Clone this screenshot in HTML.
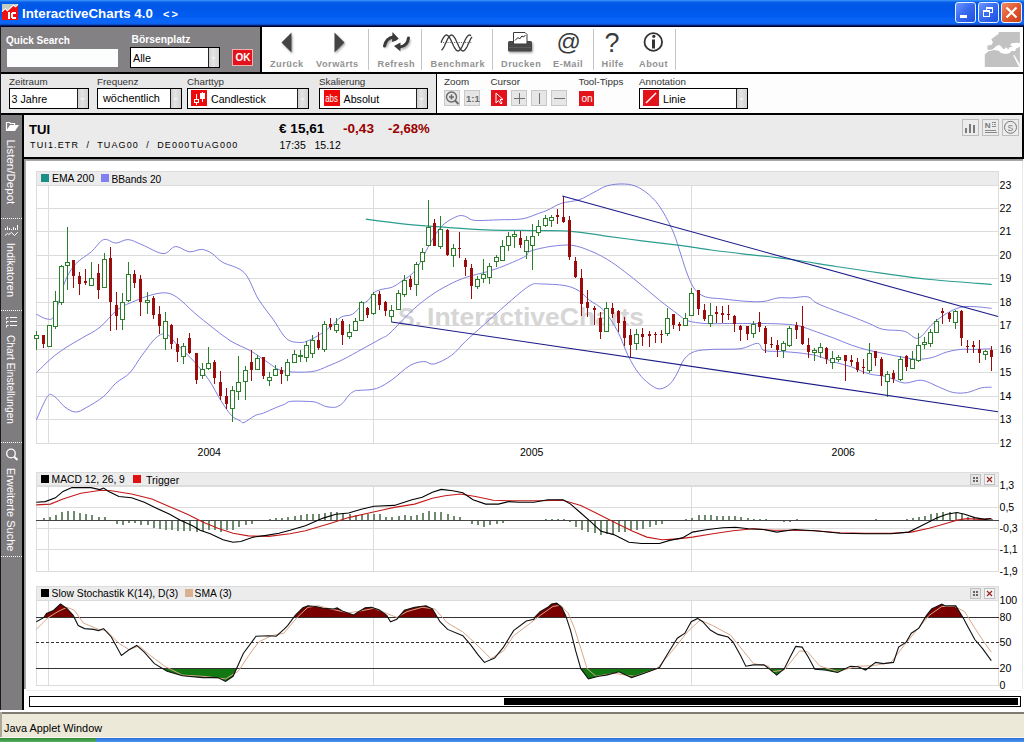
<!DOCTYPE html><html><head><meta charset="utf-8"><style>
html,body{margin:0;padding:0;width:1024px;height:742px;overflow:hidden;background:#fff;font-family:"Liberation Sans",sans-serif;}
.r{position:absolute;box-sizing:border-box;}
.t{position:absolute;white-space:pre;font-family:"Liberation Sans",sans-serif;}
svg{position:absolute;overflow:visible;}
</style></head><body>

<div class="r" style="left:0;top:0;width:1024px;height:27px;background:linear-gradient(to bottom,#3d95ff 0px,#2680f5 1px,#0a61e6 2px,#0058e6 4px,#0058ea 9px,#005cf0 16px,#0b66f8 20px,#0b66f8 23px,#0d5ce0 24px,#0a3ca8 25px,#000030 26px,#000030 27px);"></div>
<svg style="left:2px;top:4px" width="16" height="16" viewBox="0 0 16 16" shape-rendering="crispEdges">
<rect x="0" y="0" width="16" height="16" fill="#f01010"/>
<polygon points="0,0 16,0 16,0.2 13.6,2.6 11.5,1 5.4,6.6 3.4,4.5 0,7.4" fill="#c4ccc4"/>
<polyline points="0,7.6 3.4,4.7 5.4,6.8 11.5,1.2 13.6,2.8 16,0.4" fill="none" stroke="#fff" stroke-width="1.1" shape-rendering="auto"/>
<rect x="6" y="8" width="2" height="7" fill="#fff"/>
<path d="M10,8 h4 v2 h-3 v3 h3 v2 h-4 l-1,-1 v-5 z" fill="#fff"/>
</svg>
<div class="t" style="left:22px;top:6.74px;font-size:13.3px;line-height:13.3px;font-weight:bold;color:#fff;">InteractiveCharts 4.0</div>
<div class="t" style="left:163px;top:8.69px;font-size:11px;line-height:11px;font-weight:bold;color:#fff;letter-spacing:2px;">&lt;&gt;</div>
<div class="r" style="left:955px;top:2px;width:21px;height:21px;border:1px solid #e8f0ff;border-radius:3px;background:linear-gradient(135deg,#6f96ff,#3a6cf0 45%,#1d50e0);"></div>
<div class="r" style="left:978px;top:2px;width:21px;height:21px;border:1px solid #e8f0ff;border-radius:3px;background:linear-gradient(135deg,#6f96ff,#3a6cf0 45%,#1d50e0);"></div>
<div class="r" style="left:1001px;top:2px;width:21px;height:21px;border:1px solid #e8f0ff;border-radius:3px;background:linear-gradient(135deg,#ee8a66,#e2582e 50%,#cc4018);"></div>
<div class="r" style="left:960px;top:15px;width:7px;height:3px;background:#fff"></div>
<div class="r" style="left:986px;top:7px;width:7px;height:6px;border:1px solid #fff;border-top-width:2px"></div>
<div class="r" style="left:983px;top:10px;width:7px;height:7px;border:1px solid #fff;border-top-width:2px;background:#3a6cf0"></div>
<svg style="left:1001px;top:2px" width="21" height="21"><path d="M5.5,5.5 L15.5,15.5 M15.5,5.5 L5.5,15.5" stroke="#fff" stroke-width="2.2"/></svg>
<div class="r" style="left:0px;top:26px;width:1px;height:686px;background:#1a1a1a;"></div>
<div class="r" style="left:1023px;top:26px;width:1px;height:133px;background:#000;"></div>
<div class="r" style="left:1px;top:27px;width:259px;height:45px;background:#838183;"></div>
<div class="r" style="left:260px;top:27px;width:2px;height:45px;background:#000;"></div>
<div class="r" style="left:262px;top:27px;width:761px;height:45px;background:#fff;"></div>
<div class="r" style="left:1px;top:72px;width:1022px;height:2px;background:#000;"></div>
<div class="t" style="left:6px;top:35.53px;font-size:10px;line-height:10px;font-weight:bold;color:#fff;">Quick Search</div>
<div class="r" style="left:7px;top:49px;width:111px;height:18px;background:#fcfefe;"></div>
<div class="t" style="left:131.5px;top:35.28px;font-size:10.3px;line-height:10.3px;font-weight:bold;color:#fff;">Börsenplatz</div>
<div class="r" style="left:130px;top:47px;width:90px;height:21px;background:#fff;border:1px solid #000;"></div>
<div class="r" style="left:208px;top:48px;width:11px;height:19px;background:linear-gradient(to right,#cfcfcf,#e4e4e4 40%,#d2d2d2);border-left:1px solid #222;"></div>
<svg style="left:211px;top:57px" width="6" height="3"><polygon points="0,0 5,0 2.5,2.5" fill="#f2f2f2"/></svg>
<div class="t" style="left:133px;top:52.86px;font-size:10.8px;line-height:10.8px;font-weight:normal;color:#000;">Alle</div>
<div class="r" style="left:232px;top:49px;width:21px;height:17px;background:#e3131b;border:1px solid #f2b0b0;"></div>
<div class="t" style="left:235.5px;top:53.03px;font-size:10px;line-height:10px;font-weight:bold;color:#fff;">OK</div>
<div class="r" style="left:368px;top:29px;width:1px;height:41px;background:#c4c4c4;"></div>
<div class="r" style="left:421px;top:29px;width:1px;height:41px;background:#c4c4c4;"></div>
<div class="r" style="left:492px;top:29px;width:1px;height:41px;background:#c4c4c4;"></div>
<div class="r" style="left:593px;top:29px;width:1px;height:41px;background:#c4c4c4;"></div>
<div class="r" style="left:675px;top:29px;width:1px;height:41px;background:#c4c4c4;"></div>
<div class="t" style="left:270px;top:59.71px;font-size:9.2px;line-height:9.2px;font-weight:bold;color:#929292;letter-spacing:0.5px;">Zurück</div>
<div class="t" style="left:316px;top:59.71px;font-size:9.2px;line-height:9.2px;font-weight:bold;color:#929292;letter-spacing:0.5px;">Vorwärts</div>
<div class="t" style="left:377.5px;top:59.71px;font-size:9.2px;line-height:9.2px;font-weight:bold;color:#929292;letter-spacing:0.5px;">Refresh</div>
<div class="t" style="left:430.5px;top:59.71px;font-size:9.2px;line-height:9.2px;font-weight:bold;color:#929292;letter-spacing:0.5px;">Benchmark</div>
<div class="t" style="left:501px;top:59.71px;font-size:9.2px;line-height:9.2px;font-weight:bold;color:#929292;letter-spacing:0.5px;">Drucken</div>
<div class="t" style="left:553px;top:59.71px;font-size:9.2px;line-height:9.2px;font-weight:bold;color:#929292;letter-spacing:0.5px;">E-Mail</div>
<div class="t" style="left:601.5px;top:59.71px;font-size:9.2px;line-height:9.2px;font-weight:bold;color:#929292;letter-spacing:0.5px;">Hilfe</div>
<div class="t" style="left:639px;top:59.71px;font-size:9.2px;line-height:9.2px;font-weight:bold;color:#929292;letter-spacing:0.5px;">About</div>

<svg style="left:0;top:0" width="700" height="60" viewBox="0 0 700 60">
<defs><filter id="sh" x="-30%" y="-30%" width="160%" height="160%"><feGaussianBlur stdDeviation="0.9"/></filter></defs>
<g opacity="0.35" filter="url(#sh)" transform="translate(1,1.6)">
<polygon points="291.5,32.5 281.5,42.5 291.5,52.5" fill="#000"/>
<polygon points="334.5,32.5 344.5,42.5 334.5,52.5" fill="#000"/>
<path d="M384.5,46 Q386,38.5 393,37" fill="none" stroke="#000" stroke-width="3"/>
<path d="M408.5,38 Q407.5,46 400,47" fill="none" stroke="#000" stroke-width="3"/>
<rect x="508" y="41" width="24" height="10.5" rx="1.5" fill="#000"/>
</g>
<polygon points="291.5,32.5 281.5,42.5 291.5,52.5" fill="#444"/>
<polygon points="334.5,32.5 344.5,42.5 334.5,52.5" fill="#444"/>
<path d="M384.5,46 Q386,38.5 393,37" fill="none" stroke="#3a3a3a" stroke-width="3" stroke-linecap="round"/>
<polygon points="392.5,32 399.5,39.5 392,42" fill="#3a3a3a"/>
<path d="M408.5,38 Q407.5,46 400,47" fill="none" stroke="#3a3a3a" stroke-width="3" stroke-linecap="round"/>
<polygon points="400.5,42.5 394,46 400.5,51.5" fill="#3a3a3a"/>
<line x1="394" y1="44" x2="399" y2="39" stroke="#fff" stroke-width="1.2"/>
<polyline points="441.0,42.5 441.5,41.4 442.0,40.3 442.5,39.3 443.0,38.4 443.5,37.5 444.0,36.8 444.5,36.2 445.0,35.7 445.5,35.3 446.0,35.1 446.5,35.0 447.0,35.1 447.5,35.3 448.0,35.7 448.5,36.2 449.0,36.8 449.5,37.5 450.0,38.4 450.5,39.3 451.0,40.3 451.5,41.4 452.0,42.5 452.5,43.5 453.0,44.6 453.5,45.7 454.0,46.7 454.5,47.6 455.0,48.5 455.5,49.2 456.0,49.8 456.5,50.3 457.0,50.7 457.5,50.9 458.0,51.0 458.5,50.9 459.0,50.7 459.5,50.3 460.0,49.8 460.5,49.2 461.0,48.5 461.5,47.6 462.0,46.7 462.5,45.7 463.0,44.6 463.5,43.5 464.0,42.5 464.5,41.4 465.0,40.3 465.5,39.3 466.0,38.4 466.5,37.5 467.0,36.8 467.5,36.2 468.0,35.7 468.5,35.3 469.0,35.1 469.5,35.0 470.0,35.1 470.5,35.3 471.0,35.7" fill="none" stroke="#3a3a3a" stroke-width="1.3"/>
<polyline points="441.5,50.3 442.0,49.8 442.5,49.2 443.0,48.5 443.5,47.6 444.0,46.7 444.5,45.7 445.0,44.6 445.5,43.5 446.0,42.5 446.5,41.4 447.0,40.3 447.5,39.3 448.0,38.4 448.5,37.5 449.0,36.8 449.5,36.2 450.0,35.7 450.5,35.3 451.0,35.1 451.5,35.0 452.0,35.1 452.5,35.3 453.0,35.7 453.5,36.2 454.0,36.8 454.5,37.5 455.0,38.4 455.5,39.3 456.0,40.3 456.5,41.4 457.0,42.5 457.5,43.5 458.0,44.6 458.5,45.7 459.0,46.7 459.5,47.6 460.0,48.5 460.5,49.2 461.0,49.8 461.5,50.3 462.0,50.7 462.5,50.9 463.0,51.0 463.5,50.9 464.0,50.7 464.5,50.3 465.0,49.8 465.5,49.2 466.0,48.5 466.5,47.6 467.0,46.7 467.5,45.7 468.0,44.6 468.5,43.5 469.0,42.5 469.5,41.4 470.0,40.3 470.5,39.3 471.0,38.4 471.5,37.5 472.0,36.8" fill="none" stroke="#3a3a3a" stroke-width="1.3"/>
<line x1="441" y1="42.5" x2="472" y2="42.5" stroke="#555" stroke-width="1" stroke-dasharray="1,1.2"/>
<rect x="508" y="41" width="24" height="10.5" rx="1.5" fill="#474747"/>
<rect x="509" y="47" width="22" height="1" fill="#5a5a5a"/>
<path d="M513.5,32.5 H525 L527,34.5 V44 H513.5 Z" fill="#fff" stroke="#3a3a3a" stroke-width="1"/>
<polyline points="515,40.5 518,37.5 519.5,39 522,36 523.5,37 525.5,35" fill="none" stroke="#222" stroke-width="1"/>
<text x="556.5" y="49.5" font-family="Liberation Sans" font-size="24" fill="#3a3a3a">@</text>
<text x="604.5" y="51.6" font-family="Liberation Sans" font-size="27" fill="#3a3a3a">?</text>
<circle cx="653.3" cy="42" r="8.8" fill="none" stroke="#333" stroke-width="1.8"/>
<rect x="652" y="39.5" width="3" height="9" fill="#333"/>
<circle cx="653.8" cy="36.3" r="1.6" fill="#333"/>
</svg>

<svg style="left:0;top:0" width="1024" height="80"><polygon points="984.8,67.1 984.8,54.6 988.5,51.2 994.2,50.1 998.7,50.7 1001.0,52.9 1005.5,54.0 1009.4,53.2 1011.7,50.9 1015.1,50.9 1016.2,48.4 1019.9,46.7 1019.9,67.1" fill="#c2c2c2"/><polygon points="987.4,49.5 987.4,45.6 991.3,45.0 993.0,42.4 991.3,39.3 994.2,37.1 998.7,33.7 998.7,32.0 1019.9,32.0 1019.9,43.0 1016.2,42.8 1011.7,43.2 1010.0,45.0 1012.8,46.7 1009.4,47.3 1008.3,49.5 1006.0,47.3 1003.8,49.5 999.8,45.0 997.0,45.6 993.0,49.0 990.2,50.1" fill="#c2c2c2"/><polygon points="1014.0,54.6 1019.9,64.2 1019.9,67.1 1019.1,67.1 1013.4,55.7" fill="#fff"/></svg>
<div class="r" style="left:1px;top:74px;width:435px;height:39px;background:#e8e8e8;"></div>
<div class="r" style="left:436px;top:74px;width:1px;height:39px;background:#000;"></div>
<div class="r" style="left:437px;top:74px;width:586px;height:39px;background:#fdfdfd;"></div>
<div class="r" style="left:1px;top:113px;width:1022px;height:2px;background:#000;"></div>
<div class="t" style="left:9px;top:76.70px;font-size:9.8px;line-height:9.8px;font-weight:normal;color:#333;">Zeitraum</div>
<div class="t" style="left:97px;top:76.70px;font-size:9.8px;line-height:9.8px;font-weight:normal;color:#333;">Frequenz</div>
<div class="t" style="left:187px;top:76.70px;font-size:9.8px;line-height:9.8px;font-weight:normal;color:#333;">Charttyp</div>
<div class="t" style="left:319px;top:76.70px;font-size:9.8px;line-height:9.8px;font-weight:normal;color:#333;">Skalierung</div>
<div class="t" style="left:444px;top:76.70px;font-size:9.8px;line-height:9.8px;font-weight:normal;color:#333;">Zoom</div>
<div class="t" style="left:490.5px;top:76.70px;font-size:9.8px;line-height:9.8px;font-weight:normal;color:#333;">Cursor</div>
<div class="t" style="left:578.5px;top:76.70px;font-size:9.8px;line-height:9.8px;font-weight:normal;color:#333;">Tool-Tipps</div>
<div class="t" style="left:639px;top:76.70px;font-size:9.8px;line-height:9.8px;font-weight:normal;color:#333;">Annotation</div>
<div class="r" style="left:9px;top:88px;width:80px;height:21px;background:#fff;border:1px solid #000;"></div>
<div class="r" style="left:77px;top:89px;width:11px;height:19px;background:linear-gradient(to right,#cfcfcf,#e4e4e4 40%,#d2d2d2);border-left:1px solid #222;"></div>
<svg style="left:80px;top:98px" width="6" height="3"><polygon points="0,0 5,0 2.5,2.5" fill="#f2f2f2"/></svg>
<div class="t" style="left:11.5px;top:93.54px;font-size:10.7px;line-height:10.7px;font-weight:normal;color:#000;">3 Jahre</div>
<div class="r" style="left:97px;top:88px;width:85px;height:21px;background:#fff;border:1px solid #000;"></div>
<div class="r" style="left:170px;top:89px;width:11px;height:19px;background:linear-gradient(to right,#cfcfcf,#e4e4e4 40%,#d2d2d2);border-left:1px solid #222;"></div>
<svg style="left:173px;top:98px" width="6" height="3"><polygon points="0,0 5,0 2.5,2.5" fill="#f2f2f2"/></svg>
<div class="t" style="left:103px;top:93.37px;font-size:10.9px;line-height:10.9px;font-weight:normal;color:#000;">wöchentlich</div>
<div class="r" style="left:187px;top:88px;width:122px;height:21px;background:#fff;border:1px solid #000;"></div>
<div class="r" style="left:297px;top:89px;width:11px;height:19px;background:linear-gradient(to right,#cfcfcf,#e4e4e4 40%,#d2d2d2);border-left:1px solid #222;"></div>
<svg style="left:300px;top:98px" width="6" height="3"><polygon points="0,0 5,0 2.5,2.5" fill="#f2f2f2"/></svg>
<div class="t" style="left:211px;top:93.63px;font-size:10.6px;line-height:10.6px;font-weight:normal;color:#000;">Candlestick</div>
<div class="r" style="left:319px;top:88px;width:109px;height:21px;background:#fff;border:1px solid #000;"></div>
<div class="r" style="left:416px;top:89px;width:11px;height:19px;background:linear-gradient(to right,#cfcfcf,#e4e4e4 40%,#d2d2d2);border-left:1px solid #222;"></div>
<svg style="left:419px;top:98px" width="6" height="3"><polygon points="0,0 5,0 2.5,2.5" fill="#f2f2f2"/></svg>
<div class="t" style="left:343.5px;top:93.54px;font-size:10.7px;line-height:10.7px;font-weight:normal;color:#000;">Absolut</div>
<div class="r" style="left:639px;top:88px;width:109px;height:21px;background:#fff;border:1px solid #000;"></div>
<div class="r" style="left:736px;top:89px;width:11px;height:19px;background:linear-gradient(to right,#cfcfcf,#e4e4e4 40%,#d2d2d2);border-left:1px solid #222;"></div>
<svg style="left:739px;top:98px" width="6" height="3"><polygon points="0,0 5,0 2.5,2.5" fill="#f2f2f2"/></svg>
<div class="t" style="left:663px;top:93.54px;font-size:10.7px;line-height:10.7px;font-weight:normal;color:#000;">Linie</div>
<svg style="left:191px;top:90px" width="16" height="16" shape-rendering="crispEdges"><rect width="16" height="16" fill="#ee0a0a"/><path d="M5.5,4 V15 M11.5,2 V12" stroke="#fff" stroke-width="1"/><rect x="3.5" y="9.5" width="4" height="3" fill="#ee0a0a" stroke="#fff"/><rect x="9" y="3" width="5" height="6" fill="#fff"/></svg>
<svg style="left:324px;top:90px" width="16" height="16"><rect width="16" height="16" fill="#ee0a0a"/><text x="1.2" y="11.7" font-size="10" fill="#fff" font-family="Liberation Sans" textLength="12.7" lengthAdjust="spacingAndGlyphs">abs</text></svg>
<svg style="left:643px;top:90px" width="16" height="16"><rect width="16" height="16" fill="#e3131b"/><path d="M3,13 L13,3" stroke="#fff" stroke-width="1.5"/></svg>
<div class="r" style="left:444px;top:90px;width:16px;height:16px;background:#e6e6e6;border:1px solid #c8c8c8;"></div>
<div class="r" style="left:464px;top:90px;width:16px;height:16px;background:#e6e6e6;border:1px solid #c8c8c8;"></div>
<div class="r" style="left:491px;top:90px;width:16px;height:16px;background:#e3131b;border:1px solid #e3131b;"></div>
<div class="r" style="left:511px;top:90px;width:16px;height:16px;background:#e6e6e6;border:1px solid #c8c8c8;"></div>
<div class="r" style="left:531px;top:90px;width:16px;height:16px;background:#e6e6e6;border:1px solid #c8c8c8;"></div>
<div class="r" style="left:551px;top:90px;width:16px;height:16px;background:#e6e6e6;border:1px solid #c8c8c8;"></div>
<div class="r" style="left:579px;top:91px;width:15px;height:15px;background:#e3131b;"></div>
<div class="t" style="left:581.5px;top:93.53px;font-size:10px;line-height:10px;font-weight:normal;color:#fff;">on</div>
<svg style="left:444px;top:90px" width="16" height="16"><circle cx="7.5" cy="7" r="5" fill="none" stroke="#6a6a6a" stroke-width="1.4"/><path d="M5,7 H10 M7.5,4.5 V9.5" stroke="#6a6a6a" stroke-width="1.6"/><path d="M11,10.5 L14.5,14" stroke="#6a6a6a" stroke-width="2"/></svg>
<div class="t" style="left:466px;top:94.46px;font-size:9.5px;line-height:9.5px;font-weight:bold;color:#6a6a6a;">1:1</div>
<svg style="left:491px;top:90px" width="16" height="16"><path d="M5,3 L5,13 L7.5,10.5 L10,14 L11,13 L9,9.5 L12,9.5 Z" fill="#e3131b" stroke="#fff" stroke-width="1"/></svg>
<svg style="left:511px;top:90px" width="16" height="16"><path d="M8.5,3 V14 M3,8.5 H14" stroke="#707070" stroke-width="1"/></svg>
<svg style="left:531px;top:90px" width="16" height="16"><path d="M8.5,3 V14" stroke="#707070" stroke-width="1"/></svg>
<svg style="left:551px;top:90px" width="16" height="16"><path d="M3,8.5 H14" stroke="#707070" stroke-width="1"/></svg>
<div class="r" style="left:1px;top:115px;width:21px;height:595px;background:#7e7c7f;"></div>
<div class="r" style="left:22px;top:115px;width:2px;height:595px;background:#000;"></div>
<svg style="left:0;top:0" width="24" height="712" viewBox="0 0 24 712"><rect x="1" y="218" width="1" height="1" fill="#fff"/><rect x="3" y="218" width="1" height="1" fill="#fff"/><rect x="5" y="218" width="1" height="1" fill="#fff"/><rect x="7" y="218" width="1" height="1" fill="#fff"/><rect x="9" y="218" width="1" height="1" fill="#fff"/><rect x="11" y="218" width="1" height="1" fill="#fff"/><rect x="13" y="218" width="1" height="1" fill="#fff"/><rect x="15" y="218" width="1" height="1" fill="#fff"/><rect x="17" y="218" width="1" height="1" fill="#fff"/><rect x="19" y="218" width="1" height="1" fill="#fff"/><rect x="21" y="218" width="1" height="1" fill="#fff"/><rect x="1" y="310" width="1" height="1" fill="#fff"/><rect x="3" y="310" width="1" height="1" fill="#fff"/><rect x="5" y="310" width="1" height="1" fill="#fff"/><rect x="7" y="310" width="1" height="1" fill="#fff"/><rect x="9" y="310" width="1" height="1" fill="#fff"/><rect x="11" y="310" width="1" height="1" fill="#fff"/><rect x="13" y="310" width="1" height="1" fill="#fff"/><rect x="15" y="310" width="1" height="1" fill="#fff"/><rect x="17" y="310" width="1" height="1" fill="#fff"/><rect x="19" y="310" width="1" height="1" fill="#fff"/><rect x="21" y="310" width="1" height="1" fill="#fff"/><rect x="1" y="442" width="1" height="1" fill="#fff"/><rect x="3" y="442" width="1" height="1" fill="#fff"/><rect x="5" y="442" width="1" height="1" fill="#fff"/><rect x="7" y="442" width="1" height="1" fill="#fff"/><rect x="9" y="442" width="1" height="1" fill="#fff"/><rect x="11" y="442" width="1" height="1" fill="#fff"/><rect x="13" y="442" width="1" height="1" fill="#fff"/><rect x="15" y="442" width="1" height="1" fill="#fff"/><rect x="17" y="442" width="1" height="1" fill="#fff"/><rect x="19" y="442" width="1" height="1" fill="#fff"/><rect x="21" y="442" width="1" height="1" fill="#fff"/><rect x="1" y="556" width="1" height="1" fill="#fff"/><rect x="3" y="556" width="1" height="1" fill="#fff"/><rect x="5" y="556" width="1" height="1" fill="#fff"/><rect x="7" y="556" width="1" height="1" fill="#fff"/><rect x="9" y="556" width="1" height="1" fill="#fff"/><rect x="11" y="556" width="1" height="1" fill="#fff"/><rect x="13" y="556" width="1" height="1" fill="#fff"/><rect x="15" y="556" width="1" height="1" fill="#fff"/><rect x="17" y="556" width="1" height="1" fill="#fff"/><rect x="19" y="556" width="1" height="1" fill="#fff"/><rect x="21" y="556" width="1" height="1" fill="#fff"/><path d="M6.5,131 V122.5 H9.5 L10.5,123.5 H14.5 V125" fill="none" stroke="#fff" stroke-width="1.2"/><polygon points="6,131 15,131 19,125 10,125" fill="#fff"/><g fill="#fff"><rect x="5" y="228" width="1" height="2"/><rect x="7" y="226.5" width="1" height="3.5"/><rect x="9" y="228" width="1" height="2"/><rect x="11" y="229" width="1" height="1"/><rect x="13" y="227" width="1" height="3"/><rect x="15" y="228" width="1" height="2"/><rect x="17" y="225" width="1" height="5"/></g><polyline points="5,235.6 7.4,233.4 8.8,234.5 11.5,232.4 14.5,235.6 17.7,232.2" fill="none" stroke="#fff" stroke-width="1"/><path d="M6.5,319.5 V317.5 H8.5" fill="none" stroke="#fff" stroke-width="1"/><rect x="10" y="317" width="7" height="1" fill="#fff"/><path d="M6.5,323.5 V321.5 H8.5" fill="none" stroke="#fff" stroke-width="1"/><rect x="10" y="321" width="7" height="1" fill="#fff"/><path d="M6.5,327.5 V325.5 H8.5" fill="none" stroke="#fff" stroke-width="1"/><rect x="10" y="325" width="7" height="1" fill="#fff"/><circle cx="11" cy="453.5" r="4.3" fill="none" stroke="#fff" stroke-width="1.3"/><line x1="14.2" y1="456.8" x2="17.5" y2="460" stroke="#fff" stroke-width="2"/><g font-family="Liberation Sans" font-size="11.5" fill="#fff"><text transform="translate(7,139.4) rotate(90)" textLength="64.9" lengthAdjust="spacingAndGlyphs">Listen/Depot</text><text transform="translate(7,242.8) rotate(90)" textLength="54.2" lengthAdjust="spacingAndGlyphs">Indikatoren</text><text transform="translate(7,335) rotate(90)" textLength="89" lengthAdjust="spacingAndGlyphs">Chart Einstellungen</text><text transform="translate(7,467.7) rotate(90)" textLength="83.7" lengthAdjust="spacingAndGlyphs">Erweiterte Suche</text></g></svg>
<div class="r" style="left:24px;top:115px;width:998px;height:42px;background:#ebebeb;"></div>
<div class="r" style="left:1022px;top:115px;width:1px;height:44px;background:#000;"></div>
<div class="r" style="left:24px;top:157px;width:999px;height:2px;background:#000;"></div>
<div class="t" style="left:29px;top:122.91px;font-size:13.1px;line-height:13.1px;font-weight:bold;color:#000;">TUI</div>
<div class="t" style="left:30px;top:141.38px;font-size:9px;line-height:9px;font-weight:normal;color:#000;letter-spacing:1.14px;">TUI1.ETR  /  TUAG00  /  DE000TUAG000</div>
<div class="t" style="left:279px;top:121.99px;font-size:13.6px;line-height:13.6px;font-weight:bold;color:#000;">€ 15,61</div>
<div class="t" style="left:343px;top:121.99px;font-size:13.6px;line-height:13.6px;font-weight:bold;color:#990000;">-0,43</div>
<div class="t" style="left:388px;top:122.33px;font-size:13.2px;line-height:13.2px;font-weight:bold;color:#990000;">-2,68%</div>
<div class="t" style="left:279.5px;top:140.11px;font-size:10.5px;line-height:10.5px;font-weight:normal;color:#000;">17:35   15.12</div>
<div class="r" style="left:962px;top:119px;width:17px;height:17px;background:#ececec;border:1px solid #bdbdbd;"></div>
<div class="r" style="left:982px;top:119px;width:17px;height:17px;background:#ececec;border:1px solid #bdbdbd;"></div>
<div class="r" style="left:1002px;top:119px;width:17px;height:17px;background:#ececec;border:1px solid #bdbdbd;"></div>
<svg style="left:0;top:0" width="1024" height="160"><g fill="#7a7a7a"><rect x="965" y="128" width="2" height="5"/><rect x="969" y="124" width="2" height="9"/><rect x="973" y="125" width="2" height="8"/></g><text x="984.8" y="127.8" font-family="Liberation Sans" font-size="8" font-weight="bold" fill="#777">N</text><g fill="#888"><rect x="992" y="122" width="4" height="1"/><rect x="992" y="124" width="1" height="1"/><rect x="994" y="124" width="2" height="1"/><rect x="992" y="126" width="4" height="1"/><rect x="985" y="130" width="11" height="1"/><rect x="985" y="132" width="12" height="1"/></g><circle cx="1010.5" cy="127.3" r="6" fill="none" stroke="#777" stroke-width="1"/><text x="1007.6" y="130.5" font-family="Liberation Sans" font-size="8.5" fill="#777">S</text></svg>
<div class="r" style="left:24px;top:159px;width:1000px;height:551px;background:#fff;"></div>
<div class="r" style="left:24px;top:159px;width:999px;height:2px;background:linear-gradient(#8c8c8c,#b4b4b4);"></div>
<div class="r" style="left:24px;top:159px;width:2px;height:530px;background:linear-gradient(to right,#8c8c8c,#b4b4b4);"></div>
<div class="r" style="left:1022px;top:161px;width:1px;height:528px;background:#e8e8e8;"></div>
<div class="r" style="left:26px;top:690px;width:996px;height:1px;background:#eeeeee;"></div>
<svg style="left:0;top:0" width="1024" height="742" viewBox="0 0 1024 742" shape-rendering="crispEdges">
<rect x="36.5" y="171.5" width="962" height="14" fill="#ececec" stroke="#dcdcdc"/>
<line x1="36" y1="443.5" x2="999" y2="443.5" stroke="#dcdcdc"/>
<line x1="36" y1="419.5" x2="999" y2="419.5" stroke="#dcdcdc"/>
<line x1="36" y1="396.5" x2="999" y2="396.5" stroke="#dcdcdc"/>
<line x1="36" y1="372.5" x2="999" y2="372.5" stroke="#dcdcdc"/>
<line x1="36" y1="349.5" x2="999" y2="349.5" stroke="#dcdcdc"/>
<line x1="36" y1="325.5" x2="999" y2="325.5" stroke="#dcdcdc"/>
<line x1="36" y1="302.5" x2="999" y2="302.5" stroke="#dcdcdc"/>
<line x1="36" y1="278.5" x2="999" y2="278.5" stroke="#dcdcdc"/>
<line x1="36" y1="255.5" x2="999" y2="255.5" stroke="#dcdcdc"/>
<line x1="36" y1="231.5" x2="999" y2="231.5" stroke="#dcdcdc"/>
<line x1="36" y1="208.5" x2="999" y2="208.5" stroke="#dcdcdc"/>
<line x1="36" y1="185.5" x2="999" y2="185.5" stroke="#dcdcdc"/>
<line x1="48.5" y1="185" x2="48.5" y2="443" stroke="#dcdcdc"/>
<line x1="373.5" y1="185" x2="373.5" y2="443" stroke="#dcdcdc"/>
<line x1="691.5" y1="185" x2="691.5" y2="443" stroke="#dcdcdc"/>
<line x1="36.5" y1="171" x2="36.5" y2="443" stroke="#dcdcdc"/>
<line x1="998.5" y1="171" x2="998.5" y2="443" stroke="#dcdcdc"/>
<text x="427" y="325.5" font-family="Liberation Sans" font-weight="bold" font-size="25" fill="#d6d6d6" textLength="217" lengthAdjust="spacingAndGlyphs">InteractiveCharts</text>
<text x="398" y="325.5" font-family="Liberation Sans" font-weight="bold" font-size="25" fill="#d6d6d6">S.</text>
</svg>
<svg style="left:0;top:0" width="1024" height="742" viewBox="0 0 1024 742">
<path d="M36.3,314.2 C38.2,315.0 44.5,319.0 47.5,319.1 C50.5,319.2 51.6,321.1 54.5,314.9 C57.4,308.6 61.5,290.1 65.0,281.6 C68.5,273.1 71.1,269.1 75.5,264.1 C79.9,259.1 86.6,255.9 91.3,251.8 C96.0,247.7 99.5,241.1 103.6,239.6 C107.7,238.1 111.7,243.1 115.8,243.1 C119.9,243.1 123.7,239.3 128.1,239.6 C132.5,239.9 136.3,242.5 142.1,244.8 C147.9,247.1 157.5,253.3 163.1,253.6 C168.7,253.9 171.0,246.9 175.4,246.6 C179.8,246.3 185.0,251.3 189.4,251.8 C193.8,252.3 197.9,249.1 201.7,249.4 C205.5,249.7 208.7,251.4 212.2,253.6 C215.7,255.8 217.4,259.1 222.7,262.3 C228.0,265.5 238.3,266.5 244.2,272.6 C250.1,278.7 253.4,291.1 258.3,299.0 C263.2,306.9 268.7,313.2 273.4,319.8 C278.1,326.4 282.2,334.9 286.6,338.7 C291.0,342.5 296.0,342.2 299.8,342.5 C303.6,342.8 305.7,341.6 309.2,340.2 C312.7,338.8 316.8,336.4 320.6,334.0 C324.4,331.6 328.4,328.3 331.9,325.5 C335.3,322.7 337.9,318.9 341.3,317.0 C344.8,315.1 349.1,316.2 352.6,314.2 C356.1,312.1 359.5,307.1 362.1,304.7 C364.8,302.3 366.5,302.0 368.5,300.0 C370.5,298.0 372.1,294.4 374.2,292.6 C376.3,290.9 378.1,290.4 381.2,289.5 C384.2,288.6 388.9,288.5 392.5,287.0 C396.1,285.5 398.9,283.1 402.5,280.6 C406.1,278.1 410.5,275.8 413.8,272.1 C417.1,268.5 420.0,262.8 422.3,258.7 C424.6,254.6 425.5,251.7 427.9,247.4 C430.2,243.2 433.6,237.2 436.4,233.2 C439.2,229.2 441.4,226.1 444.9,223.3 C448.4,220.5 454.3,217.4 457.6,216.2 C460.9,215.0 462.3,215.6 464.7,216.2 C467.1,216.8 469.2,219.1 471.8,219.8 C474.4,220.5 475.5,220.5 480.0,220.5 C484.5,220.5 491.6,220.1 498.6,219.8 C505.6,219.5 515.4,220.0 522.0,218.9 C528.6,217.8 534.1,215.0 538.4,213.5 C542.7,212.0 543.9,211.7 547.8,210.0 C551.6,208.3 556.3,205.0 561.5,203.3 C566.7,201.6 573.7,201.6 579.0,199.8 C584.3,198.1 588.4,195.1 593.1,192.8 C597.8,190.5 601.9,187.3 607.1,185.8 C612.4,184.3 619.4,183.7 624.6,184.0 C629.9,184.3 633.9,185.2 638.6,187.5 C643.3,189.8 648.5,193.9 652.6,198.0 C656.7,202.1 659.6,206.2 663.1,212.0 C666.6,217.8 670.8,226.1 673.7,233.1 C676.6,240.1 678.4,247.1 680.7,254.1 C683.0,261.1 685.4,269.3 687.7,275.1 C690.0,280.9 691.8,285.5 694.7,289.1 C697.6,292.7 700.5,295.2 705.2,296.8 C709.9,298.4 715.7,298.1 722.7,298.9 C729.7,299.7 740.3,301.0 747.2,301.4 C754.1,301.8 758.9,302.0 764.0,301.4 C769.1,300.8 773.3,298.5 778.0,297.9 C782.7,297.3 787.0,298.1 792.0,297.9 C797.0,297.7 803.7,295.9 807.8,296.8 C811.9,297.7 812.2,300.9 816.6,303.1 C821.0,305.3 828.3,308.0 834.1,310.2 C839.9,312.4 845.8,314.3 851.6,316.5 C857.4,318.7 863.9,321.4 869.1,323.5 C874.4,325.6 877.2,328.1 883.1,329.4 C889.0,330.7 898.4,329.7 904.2,331.2 C910.1,332.7 913.5,339.4 918.2,338.2 C922.9,337.0 927.5,328.3 932.2,324.2 C936.9,320.1 941.5,316.5 946.2,313.7 C950.9,310.9 955.5,308.6 960.2,307.4 C964.9,306.2 969.0,306.4 974.2,306.6 C979.5,306.8 988.8,308.1 991.7,308.4" fill="none" stroke="#8080e0" stroke-width="1"/>
<path d="M36.3,372.7 C38.8,370.4 46.2,362.8 51.0,358.7 C55.8,354.6 59.7,351.7 65.0,348.2 C70.3,344.7 76.8,341.2 82.6,337.7 C88.4,334.2 94.2,331.9 100.0,327.2 C105.8,322.5 111.8,314.0 117.6,309.6 C123.4,305.2 129.8,303.2 135.1,300.9 C140.3,298.6 144.1,297.0 149.1,295.6 C154.1,294.2 160.2,292.5 164.9,292.8 C169.6,293.1 172.2,294.0 177.2,297.4 C182.2,300.8 188.9,308.1 194.7,313.1 C200.5,318.1 206.3,322.6 212.2,327.2 C218.1,331.8 223.6,336.6 230.0,340.6 C236.4,344.6 244.5,347.4 250.8,351.0 C257.1,354.6 262.4,359.0 267.7,362.3 C273.0,365.6 275.6,369.2 282.8,370.8 C290.0,372.4 303.6,372.5 311.1,371.7 C318.7,370.9 322.8,368.1 328.1,366.0 C333.5,363.9 337.5,362.2 343.2,359.4 C348.9,356.6 355.8,352.6 362.1,349.1 C368.4,345.7 376.2,341.4 380.9,338.7 C385.5,336.0 384.6,337.9 390.0,333.0 C395.4,328.1 406.3,315.8 413.1,309.6 C419.9,303.4 424.9,299.7 430.7,295.6 C436.5,291.5 442.4,288.1 448.2,285.1 C454.0,282.1 459.3,279.6 465.7,277.4 C472.1,275.2 480.3,273.7 486.7,271.8 C493.1,269.9 497.8,268.4 504.2,265.8 C510.6,263.2 521.0,258.8 525.3,256.4 C529.6,254.0 525.7,253.0 530.0,251.3 C534.3,249.6 544.0,247.4 551.0,246.4 C558.0,245.4 565.6,244.6 572.0,245.3 C578.4,246.0 583.8,248.3 589.6,250.6 C595.5,252.9 601.3,255.8 607.1,259.3 C612.9,262.8 618.8,267.2 624.6,271.6 C630.4,276.0 636.3,280.8 642.1,285.6 C647.9,290.4 653.8,295.6 659.6,300.3 C665.5,305.0 672.5,310.3 677.2,313.7 C681.9,317.1 683.0,319.1 687.7,320.7 C692.4,322.3 698.2,323.0 705.2,323.5 C712.2,324.0 719.9,323.5 729.7,323.5 C739.5,323.5 754.8,323.4 764.0,323.5 C773.2,323.6 779.2,323.8 785.0,324.2 C790.8,324.6 793.7,324.6 799.0,325.9 C804.3,327.2 810.8,329.8 816.6,331.9 C822.5,333.9 828.3,336.0 834.1,338.2 C839.9,340.4 845.8,343.2 851.6,345.2 C857.4,347.2 863.3,348.9 869.1,350.4 C874.9,351.9 880.8,352.8 886.6,354.0 C892.5,355.2 898.9,356.6 904.2,357.5 C909.5,358.4 913.5,359.2 918.2,359.2 C922.9,359.2 927.5,358.7 932.2,357.5 C936.9,356.3 941.5,353.6 946.2,352.2 C950.9,350.8 955.5,349.9 960.2,349.4 C964.9,348.9 969.0,349.5 974.2,349.4 C979.5,349.3 988.8,348.8 991.7,348.7" fill="none" stroke="#8080e0" stroke-width="1"/>
<path d="M36.3,420.0 C38.2,416.1 44.5,400.4 47.5,396.5 C50.5,392.6 51.6,394.7 54.5,396.5 C57.4,398.3 61.5,404.5 65.0,407.1 C68.5,409.7 72.0,411.9 75.5,412.0 C79.0,412.1 81.4,410.3 86.1,407.7 C90.8,405.1 98.6,400.6 103.6,396.5 C108.5,392.4 111.4,387.2 115.8,383.2 C120.2,379.2 125.5,377.4 129.9,372.7 C134.3,368.0 137.7,361.0 142.1,355.2 C146.5,349.4 152.0,341.2 156.1,337.7 C160.2,334.2 163.1,333.0 166.6,334.2 C170.1,335.4 172.5,340.0 177.2,344.7 C181.9,349.4 189.4,356.4 194.7,362.2 C199.9,368.0 204.3,373.3 208.7,379.7 C213.1,386.1 217.2,394.7 221.0,400.7 C224.8,406.7 228.3,412.2 231.5,415.5 C234.7,418.8 237.9,419.5 240.0,420.7 C242.1,421.9 241.6,423.4 244.1,422.5 C246.6,421.6 252.0,417.1 255.2,415.5 C258.4,413.9 260.1,414.4 263.4,413.1 C266.7,411.8 271.7,409.4 275.2,407.9 C278.7,406.4 282.0,405.4 284.5,404.3 C287.0,403.2 286.7,401.9 290.4,401.4 C294.1,400.9 302.5,401.2 306.8,401.4 C311.1,401.5 313.3,401.5 316.2,402.3 C319.1,403.1 321.9,405.3 324.4,406.1 C326.9,406.9 329.2,407.2 331.4,407.3 C333.5,407.4 335.4,407.5 337.3,406.7 C339.2,405.9 341.2,404.6 343.1,402.6 C345.1,400.7 347.1,396.9 349.0,395.0 C350.9,393.1 353.0,391.7 354.8,390.9 C356.6,390.1 356.4,390.7 360.0,390.3 C363.6,389.9 371.0,390.3 376.4,388.5 C381.8,386.7 386.6,383.5 392.1,379.7 C397.6,375.9 404.3,368.7 409.6,365.7 C414.9,362.7 419.6,361.8 423.7,361.5 C427.8,361.2 429.5,365.1 434.2,364.0 C438.9,362.9 446.4,359.0 451.7,355.2 C456.9,351.4 460.4,346.2 465.7,341.2 C470.9,336.2 477.4,330.7 483.2,325.4 C489.0,320.1 494.3,315.3 500.7,309.6 C507.1,303.9 516.5,295.6 521.8,291.4 C527.1,287.2 529.2,285.6 532.3,284.4 C535.4,283.1 535.0,283.7 540.5,283.9 C546.0,284.1 558.6,284.4 565.0,285.6 C571.4,286.8 574.9,288.4 579.0,290.9 C583.1,293.3 585.5,297.1 589.6,300.3 C593.7,303.5 598.9,305.1 603.6,310.2 C608.3,315.3 613.5,323.6 617.6,331.2 C621.7,338.8 624.6,348.7 628.1,355.7 C631.6,362.7 635.1,368.5 638.6,373.2 C642.1,377.9 645.6,381.1 649.1,383.7 C652.6,386.3 656.1,389.0 659.6,389.0 C663.1,389.0 667.3,386.3 670.2,383.7 C673.1,381.1 674.9,377.3 677.2,373.2 C679.5,369.1 681.3,362.8 684.2,359.2 C687.1,355.6 690.0,353.1 694.7,351.5 C699.4,349.9 704.6,349.9 712.2,349.4 C719.8,348.9 732.6,349.7 740.2,348.7 C747.8,347.7 753.7,343.1 757.7,343.4 C761.7,343.7 760.0,349.0 764.0,350.4 C768.0,351.8 775.7,351.1 781.5,351.5 C787.3,351.9 793.1,352.2 799.0,352.9 C804.9,353.6 810.8,354.2 816.6,355.7 C822.5,357.2 828.3,360.1 834.1,362.0 C839.9,363.9 845.8,364.9 851.6,366.9 C857.4,368.9 863.3,372.3 869.1,373.9 C874.9,375.5 880.8,375.2 886.6,376.7 C892.5,378.2 898.4,382.4 904.2,383.0 C910.1,383.6 915.9,379.5 921.7,380.2 C927.5,380.9 934.0,385.1 939.2,387.2 C944.5,389.2 948.5,391.6 953.2,392.5 C957.9,393.4 962.5,393.3 967.2,392.5 C971.9,391.7 977.1,388.8 981.2,387.9 C985.3,387.0 990.0,387.3 991.7,387.2" fill="none" stroke="#8080e0" stroke-width="1"/>
<path d="M365.8,219.2 C371.9,220.0 390.2,222.5 402.6,223.8 C415.0,225.1 425.9,225.9 440.0,226.9 C454.1,227.9 471.3,229.3 487.0,229.9 C502.7,230.5 520.3,230.4 534.0,230.6 C547.7,230.8 557.3,230.2 569.0,231.1 C580.7,232.0 591.8,234.2 604.0,235.8 C616.2,237.4 629.3,239.2 642.0,240.8 C654.7,242.4 668.5,243.9 680.0,245.4 C691.5,246.9 700.9,248.6 711.3,250.0 C721.7,251.4 729.8,252.2 742.5,253.8 C755.2,255.2 772.2,256.9 787.8,259.0 C803.4,261.1 820.4,264.1 836.2,266.5 C852.1,268.9 867.4,271.2 883.0,273.4 C898.6,275.6 911.9,277.7 930.0,279.5 C948.1,281.3 981.4,283.6 991.7,284.4" fill="none" stroke="#2a9d8f" stroke-width="1.2"/>
</svg>
<svg style="left:0;top:0" width="1024" height="742" viewBox="0 0 1024 742" shape-rendering="crispEdges">
<line x1="36.5" y1="331" x2="36.5" y2="350" stroke="#2b7f2b"/>
<rect x="34.5" y="335.5" width="4" height="3" fill="#fff" stroke="#2b7f2b"/>
<line x1="43.5" y1="335" x2="43.5" y2="348" stroke="#9c0c0c"/>
<rect x="42" y="335" width="3" height="9" fill="#9c0c0c"/>
<line x1="49.5" y1="325" x2="49.5" y2="347" stroke="#2b7f2b"/>
<rect x="47.5" y="325.5" width="4" height="21" fill="#fff" stroke="#2b7f2b"/>
<line x1="55.5" y1="291" x2="55.5" y2="329" stroke="#2b7f2b"/>
<rect x="53.5" y="301.5" width="4" height="25" fill="#fff" stroke="#2b7f2b"/>
<line x1="61.5" y1="265" x2="61.5" y2="305" stroke="#2b7f2b"/>
<rect x="59.5" y="266.5" width="4" height="36" fill="#fff" stroke="#2b7f2b"/>
<line x1="67.5" y1="227" x2="67.5" y2="290" stroke="#2b7f2b"/>
<rect x="65.5" y="262.5" width="4" height="3" fill="#fff" stroke="#2b7f2b"/>
<line x1="73.5" y1="260" x2="73.5" y2="288" stroke="#9c0c0c"/>
<rect x="72" y="260" width="3" height="16" fill="#9c0c0c"/>
<line x1="79.5" y1="272" x2="79.5" y2="295" stroke="#9c0c0c"/>
<rect x="78" y="276" width="3" height="8" fill="#9c0c0c"/>
<line x1="85.5" y1="269" x2="85.5" y2="285" stroke="#9c0c0c"/>
<rect x="84" y="281" width="3" height="2" fill="#9c0c0c"/>
<line x1="91.5" y1="262" x2="91.5" y2="285" stroke="#2b7f2b"/>
<rect x="89.5" y="278.5" width="4" height="7" fill="#fff" stroke="#2b7f2b"/>
<line x1="98.5" y1="264" x2="98.5" y2="299" stroke="#9c0c0c"/>
<rect x="97" y="273" width="3" height="17" fill="#9c0c0c"/>
<line x1="104.5" y1="253" x2="104.5" y2="287" stroke="#2b7f2b"/>
<rect x="102.5" y="259.5" width="4" height="28" fill="#fff" stroke="#2b7f2b"/>
<line x1="110.5" y1="247" x2="110.5" y2="331" stroke="#9c0c0c"/>
<rect x="109" y="258" width="3" height="44" fill="#9c0c0c"/>
<line x1="116.5" y1="292" x2="116.5" y2="330" stroke="#9c0c0c"/>
<rect x="115" y="305" width="3" height="11" fill="#9c0c0c"/>
<line x1="122.5" y1="293" x2="122.5" y2="330" stroke="#2b7f2b"/>
<rect x="120.5" y="302.5" width="4" height="17" fill="#fff" stroke="#2b7f2b"/>
<line x1="128.5" y1="262" x2="128.5" y2="302" stroke="#2b7f2b"/>
<rect x="126.5" y="274.5" width="4" height="26" fill="#fff" stroke="#2b7f2b"/>
<line x1="134.5" y1="270" x2="134.5" y2="288" stroke="#9c0c0c"/>
<rect x="133" y="274" width="3" height="9" fill="#9c0c0c"/>
<line x1="140.5" y1="275" x2="140.5" y2="316" stroke="#9c0c0c"/>
<rect x="139" y="279" width="3" height="23" fill="#9c0c0c"/>
<line x1="147.5" y1="292" x2="147.5" y2="314" stroke="#2b7f2b"/>
<rect x="145.5" y="300.5" width="4" height="2" fill="#fff" stroke="#2b7f2b"/>
<line x1="153.5" y1="296" x2="153.5" y2="319" stroke="#9c0c0c"/>
<rect x="152" y="298" width="3" height="17" fill="#9c0c0c"/>
<line x1="159.5" y1="306" x2="159.5" y2="334" stroke="#9c0c0c"/>
<rect x="158" y="314" width="3" height="12" fill="#9c0c0c"/>
<line x1="165.5" y1="312" x2="165.5" y2="350" stroke="#2b7f2b"/>
<rect x="163.5" y="321.5" width="4" height="17" fill="#fff" stroke="#2b7f2b"/>
<line x1="171.5" y1="324" x2="171.5" y2="349" stroke="#9c0c0c"/>
<rect x="170" y="325" width="3" height="19" fill="#9c0c0c"/>
<line x1="177.5" y1="338" x2="177.5" y2="362" stroke="#9c0c0c"/>
<rect x="176" y="344" width="3" height="8" fill="#9c0c0c"/>
<line x1="183.5" y1="343" x2="183.5" y2="364" stroke="#2b7f2b"/>
<rect x="181.5" y="346.5" width="4" height="10" fill="#fff" stroke="#2b7f2b"/>
<line x1="189.5" y1="333" x2="189.5" y2="354" stroke="#9c0c0c"/>
<rect x="188" y="338" width="3" height="15" fill="#9c0c0c"/>
<line x1="196.5" y1="353" x2="196.5" y2="384" stroke="#9c0c0c"/>
<rect x="195" y="353" width="3" height="27" fill="#9c0c0c"/>
<line x1="202.5" y1="363" x2="202.5" y2="379" stroke="#2b7f2b"/>
<rect x="200.5" y="369.5" width="4" height="6" fill="#fff" stroke="#2b7f2b"/>
<line x1="208.5" y1="347" x2="208.5" y2="370" stroke="#2b7f2b"/>
<rect x="206.5" y="363.5" width="4" height="5" fill="#fff" stroke="#2b7f2b"/>
<line x1="214.5" y1="360" x2="214.5" y2="384" stroke="#9c0c0c"/>
<rect x="213" y="362" width="3" height="16" fill="#9c0c0c"/>
<line x1="220.5" y1="371" x2="220.5" y2="400" stroke="#9c0c0c"/>
<rect x="219" y="382" width="3" height="14" fill="#9c0c0c"/>
<line x1="226.5" y1="388" x2="226.5" y2="409" stroke="#9c0c0c"/>
<rect x="225" y="396" width="3" height="8" fill="#9c0c0c"/>
<line x1="232.5" y1="386" x2="232.5" y2="422" stroke="#2b7f2b"/>
<rect x="230.5" y="390.5" width="4" height="18" fill="#fff" stroke="#2b7f2b"/>
<line x1="238.5" y1="356" x2="238.5" y2="400" stroke="#2b7f2b"/>
<rect x="236.5" y="382.5" width="4" height="9" fill="#fff" stroke="#2b7f2b"/>
<line x1="245.5" y1="366" x2="245.5" y2="400" stroke="#2b7f2b"/>
<rect x="243.5" y="370.5" width="4" height="11" fill="#fff" stroke="#2b7f2b"/>
<line x1="251.5" y1="350" x2="251.5" y2="381" stroke="#9c0c0c"/>
<rect x="250" y="362" width="3" height="8" fill="#9c0c0c"/>
<line x1="257.5" y1="355" x2="257.5" y2="369" stroke="#2b7f2b"/>
<rect x="255.5" y="358.5" width="4" height="11" fill="#fff" stroke="#2b7f2b"/>
<line x1="263.5" y1="357" x2="263.5" y2="379" stroke="#9c0c0c"/>
<rect x="262" y="357" width="3" height="19" fill="#9c0c0c"/>
<line x1="269.5" y1="372" x2="269.5" y2="386" stroke="#2b7f2b"/>
<rect x="267.5" y="377.5" width="4" height="3" fill="#fff" stroke="#2b7f2b"/>
<line x1="275.5" y1="365" x2="275.5" y2="375" stroke="#2b7f2b"/>
<rect x="273.5" y="369.5" width="4" height="6" fill="#fff" stroke="#2b7f2b"/>
<line x1="281.5" y1="367" x2="281.5" y2="384" stroke="#9c0c0c"/>
<rect x="280" y="370" width="3" height="4" fill="#9c0c0c"/>
<line x1="287.5" y1="359" x2="287.5" y2="381" stroke="#2b7f2b"/>
<rect x="285.5" y="362.5" width="4" height="13" fill="#fff" stroke="#2b7f2b"/>
<line x1="294.5" y1="350" x2="294.5" y2="362" stroke="#2b7f2b"/>
<rect x="292.5" y="354.5" width="4" height="8" fill="#fff" stroke="#2b7f2b"/>
<line x1="300.5" y1="350" x2="300.5" y2="362" stroke="#2b7f2b"/>
<rect x="298.5" y="355.5" width="4" height="1" fill="#fff" stroke="#2b7f2b"/>
<line x1="306.5" y1="341" x2="306.5" y2="362" stroke="#2b7f2b"/>
<rect x="304.5" y="345.5" width="4" height="12" fill="#fff" stroke="#2b7f2b"/>
<line x1="312.5" y1="335" x2="312.5" y2="358" stroke="#2b7f2b"/>
<rect x="310.5" y="340.5" width="4" height="13" fill="#fff" stroke="#2b7f2b"/>
<line x1="318.5" y1="332" x2="318.5" y2="350" stroke="#9c0c0c"/>
<rect x="317" y="340" width="3" height="8" fill="#9c0c0c"/>
<line x1="324.5" y1="321" x2="324.5" y2="352" stroke="#2b7f2b"/>
<rect x="322.5" y="324.5" width="4" height="25" fill="#fff" stroke="#2b7f2b"/>
<line x1="330.5" y1="318" x2="330.5" y2="330" stroke="#9c0c0c"/>
<rect x="329" y="324" width="3" height="3" fill="#9c0c0c"/>
<line x1="336.5" y1="318" x2="336.5" y2="333" stroke="#2b7f2b"/>
<rect x="334.5" y="324.5" width="4" height="6" fill="#fff" stroke="#2b7f2b"/>
<line x1="342.5" y1="319" x2="342.5" y2="345" stroke="#9c0c0c"/>
<rect x="341" y="321" width="3" height="14" fill="#9c0c0c"/>
<line x1="349.5" y1="324" x2="349.5" y2="339" stroke="#2b7f2b"/>
<rect x="347.5" y="332.5" width="4" height="4" fill="#fff" stroke="#2b7f2b"/>
<line x1="355.5" y1="318" x2="355.5" y2="331" stroke="#2b7f2b"/>
<rect x="353.5" y="321.5" width="4" height="9" fill="#fff" stroke="#2b7f2b"/>
<line x1="361.5" y1="301" x2="361.5" y2="321" stroke="#2b7f2b"/>
<rect x="359.5" y="302.5" width="4" height="18" fill="#fff" stroke="#2b7f2b"/>
<line x1="367.5" y1="307" x2="367.5" y2="318" stroke="#9c0c0c"/>
<rect x="366" y="308" width="3" height="7" fill="#9c0c0c"/>
<line x1="373.5" y1="292" x2="373.5" y2="315" stroke="#2b7f2b"/>
<rect x="371.5" y="294.5" width="4" height="19" fill="#fff" stroke="#2b7f2b"/>
<line x1="379.5" y1="291" x2="379.5" y2="310" stroke="#9c0c0c"/>
<rect x="378" y="294" width="3" height="11" fill="#9c0c0c"/>
<line x1="385.5" y1="301" x2="385.5" y2="316" stroke="#9c0c0c"/>
<rect x="384" y="302" width="3" height="9" fill="#9c0c0c"/>
<line x1="391.5" y1="305" x2="391.5" y2="322" stroke="#2b7f2b"/>
<rect x="389.5" y="310.5" width="4" height="6" fill="#fff" stroke="#2b7f2b"/>
<line x1="398.5" y1="290" x2="398.5" y2="310" stroke="#2b7f2b"/>
<rect x="396.5" y="293.5" width="4" height="16" fill="#fff" stroke="#2b7f2b"/>
<line x1="404.5" y1="275" x2="404.5" y2="297" stroke="#2b7f2b"/>
<rect x="402.5" y="280.5" width="4" height="14" fill="#fff" stroke="#2b7f2b"/>
<line x1="410.5" y1="276" x2="410.5" y2="290" stroke="#9c0c0c"/>
<rect x="409" y="279" width="3" height="8" fill="#9c0c0c"/>
<line x1="416.5" y1="262" x2="416.5" y2="296" stroke="#2b7f2b"/>
<rect x="414.5" y="264.5" width="4" height="20" fill="#fff" stroke="#2b7f2b"/>
<line x1="422.5" y1="248" x2="422.5" y2="270" stroke="#2b7f2b"/>
<rect x="420.5" y="252.5" width="4" height="9" fill="#fff" stroke="#2b7f2b"/>
<line x1="428.5" y1="200" x2="428.5" y2="246" stroke="#2b7f2b"/>
<rect x="426.5" y="227.5" width="4" height="18" fill="#fff" stroke="#2b7f2b"/>
<line x1="434.5" y1="219" x2="434.5" y2="246" stroke="#9c0c0c"/>
<rect x="433" y="223" width="3" height="23" fill="#9c0c0c"/>
<line x1="440.5" y1="216" x2="440.5" y2="249" stroke="#2b7f2b"/>
<rect x="438.5" y="229.5" width="4" height="17" fill="#fff" stroke="#2b7f2b"/>
<line x1="447.5" y1="229" x2="447.5" y2="256" stroke="#9c0c0c"/>
<rect x="446" y="230" width="3" height="25" fill="#9c0c0c"/>
<line x1="453.5" y1="244" x2="453.5" y2="267" stroke="#2b7f2b"/>
<rect x="451.5" y="248.5" width="4" height="7" fill="#fff" stroke="#2b7f2b"/>
<line x1="459.5" y1="232" x2="459.5" y2="258" stroke="#9c0c0c"/>
<rect x="458" y="248" width="3" height="1" fill="#9c0c0c"/>
<line x1="465.5" y1="258" x2="465.5" y2="276" stroke="#9c0c0c"/>
<rect x="464" y="260" width="3" height="7" fill="#9c0c0c"/>
<line x1="471.5" y1="264" x2="471.5" y2="299" stroke="#9c0c0c"/>
<rect x="470" y="268" width="3" height="18" fill="#9c0c0c"/>
<line x1="477.5" y1="276" x2="477.5" y2="289" stroke="#2b7f2b"/>
<rect x="475.5" y="279.5" width="4" height="7" fill="#fff" stroke="#2b7f2b"/>
<line x1="483.5" y1="259" x2="483.5" y2="283" stroke="#2b7f2b"/>
<rect x="481.5" y="274.5" width="4" height="4" fill="#fff" stroke="#2b7f2b"/>
<line x1="489.5" y1="263" x2="489.5" y2="284" stroke="#2b7f2b"/>
<rect x="487.5" y="266.5" width="4" height="11" fill="#fff" stroke="#2b7f2b"/>
<line x1="496.5" y1="255" x2="496.5" y2="267" stroke="#2b7f2b"/>
<rect x="494.5" y="257.5" width="4" height="4" fill="#fff" stroke="#2b7f2b"/>
<line x1="502.5" y1="240" x2="502.5" y2="260" stroke="#2b7f2b"/>
<rect x="500.5" y="246.5" width="4" height="14" fill="#fff" stroke="#2b7f2b"/>
<line x1="508.5" y1="232" x2="508.5" y2="251" stroke="#2b7f2b"/>
<rect x="506.5" y="236.5" width="4" height="9" fill="#fff" stroke="#2b7f2b"/>
<line x1="514.5" y1="231" x2="514.5" y2="248" stroke="#2b7f2b"/>
<rect x="512.5" y="234.5" width="4" height="2" fill="#fff" stroke="#2b7f2b"/>
<line x1="520.5" y1="231" x2="520.5" y2="248" stroke="#9c0c0c"/>
<rect x="519" y="238" width="3" height="7" fill="#9c0c0c"/>
<line x1="526.5" y1="236" x2="526.5" y2="259" stroke="#2b7f2b"/>
<rect x="524.5" y="240.5" width="4" height="11" fill="#fff" stroke="#2b7f2b"/>
<line x1="532.5" y1="224" x2="532.5" y2="270" stroke="#2b7f2b"/>
<rect x="530.5" y="236.5" width="4" height="9" fill="#fff" stroke="#2b7f2b"/>
<line x1="538.5" y1="220" x2="538.5" y2="236" stroke="#2b7f2b"/>
<rect x="536.5" y="226.5" width="4" height="6" fill="#fff" stroke="#2b7f2b"/>
<line x1="545.5" y1="215" x2="545.5" y2="227" stroke="#2b7f2b"/>
<rect x="543.5" y="218.5" width="4" height="7" fill="#fff" stroke="#2b7f2b"/>
<line x1="551.5" y1="215" x2="551.5" y2="227" stroke="#2b7f2b"/>
<rect x="549.5" y="217.5" width="4" height="3" fill="#fff" stroke="#2b7f2b"/>
<line x1="557.5" y1="209" x2="557.5" y2="224" stroke="#9c0c0c"/>
<rect x="556" y="215" width="3" height="2" fill="#9c0c0c"/>
<line x1="563.5" y1="196" x2="563.5" y2="223" stroke="#9c0c0c"/>
<rect x="562" y="217" width="3" height="5" fill="#9c0c0c"/>
<line x1="569.5" y1="216" x2="569.5" y2="260" stroke="#9c0c0c"/>
<rect x="568" y="220" width="3" height="37" fill="#9c0c0c"/>
<line x1="575.5" y1="257" x2="575.5" y2="278" stroke="#9c0c0c"/>
<rect x="574" y="261" width="3" height="16" fill="#9c0c0c"/>
<line x1="581.5" y1="269" x2="581.5" y2="316" stroke="#9c0c0c"/>
<rect x="580" y="278" width="3" height="26" fill="#9c0c0c"/>
<line x1="587.5" y1="290" x2="587.5" y2="317" stroke="#9c0c0c"/>
<rect x="586" y="302" width="3" height="6" fill="#9c0c0c"/>
<line x1="594.5" y1="306" x2="594.5" y2="325" stroke="#9c0c0c"/>
<rect x="593" y="308" width="3" height="2" fill="#9c0c0c"/>
<line x1="600.5" y1="312" x2="600.5" y2="339" stroke="#9c0c0c"/>
<rect x="599" y="318" width="3" height="14" fill="#9c0c0c"/>
<line x1="606.5" y1="302" x2="606.5" y2="332" stroke="#2b7f2b"/>
<rect x="604.5" y="308.5" width="4" height="23" fill="#fff" stroke="#2b7f2b"/>
<line x1="612.5" y1="303" x2="612.5" y2="318" stroke="#9c0c0c"/>
<rect x="611" y="308" width="3" height="6" fill="#9c0c0c"/>
<line x1="618.5" y1="310" x2="618.5" y2="332" stroke="#9c0c0c"/>
<rect x="617" y="311" width="3" height="12" fill="#9c0c0c"/>
<line x1="624.5" y1="317" x2="624.5" y2="346" stroke="#9c0c0c"/>
<rect x="623" y="321" width="3" height="17" fill="#9c0c0c"/>
<line x1="630.5" y1="329" x2="630.5" y2="358" stroke="#9c0c0c"/>
<rect x="629" y="335" width="3" height="10" fill="#9c0c0c"/>
<line x1="636.5" y1="329" x2="636.5" y2="350" stroke="#2b7f2b"/>
<rect x="634.5" y="334.5" width="4" height="9" fill="#fff" stroke="#2b7f2b"/>
<line x1="642.5" y1="328" x2="642.5" y2="346" stroke="#9c0c0c"/>
<rect x="641" y="334" width="3" height="3" fill="#9c0c0c"/>
<line x1="649.5" y1="331" x2="649.5" y2="347" stroke="#9c0c0c"/>
<rect x="648" y="334" width="3" height="2" fill="#9c0c0c"/>
<line x1="655.5" y1="332" x2="655.5" y2="343" stroke="#9c0c0c"/>
<rect x="654" y="334" width="3" height="1" fill="#9c0c0c"/>
<line x1="661.5" y1="330" x2="661.5" y2="343" stroke="#9c0c0c"/>
<rect x="660" y="334" width="3" height="1" fill="#9c0c0c"/>
<line x1="667.5" y1="308" x2="667.5" y2="336" stroke="#2b7f2b"/>
<rect x="665.5" y="318.5" width="4" height="15" fill="#fff" stroke="#2b7f2b"/>
<line x1="673.5" y1="314" x2="673.5" y2="329" stroke="#9c0c0c"/>
<rect x="672" y="314" width="3" height="11" fill="#9c0c0c"/>
<line x1="679.5" y1="322" x2="679.5" y2="331" stroke="#9c0c0c"/>
<rect x="678" y="324" width="3" height="2" fill="#9c0c0c"/>
<line x1="685.5" y1="313" x2="685.5" y2="326" stroke="#2b7f2b"/>
<rect x="683.5" y="318.5" width="4" height="7" fill="#fff" stroke="#2b7f2b"/>
<line x1="691.5" y1="288" x2="691.5" y2="316" stroke="#2b7f2b"/>
<rect x="689.5" y="293.5" width="4" height="22" fill="#fff" stroke="#2b7f2b"/>
<line x1="698.5" y1="290" x2="698.5" y2="315" stroke="#9c0c0c"/>
<rect x="697" y="290" width="3" height="19" fill="#9c0c0c"/>
<line x1="704.5" y1="304" x2="704.5" y2="321" stroke="#9c0c0c"/>
<rect x="703" y="310" width="3" height="9" fill="#9c0c0c"/>
<line x1="710.5" y1="303" x2="710.5" y2="327" stroke="#2b7f2b"/>
<rect x="708.5" y="315.5" width="4" height="8" fill="#fff" stroke="#2b7f2b"/>
<line x1="716.5" y1="306" x2="716.5" y2="323" stroke="#9c0c0c"/>
<rect x="715" y="312" width="3" height="2" fill="#9c0c0c"/>
<line x1="722.5" y1="306" x2="722.5" y2="323" stroke="#9c0c0c"/>
<rect x="721" y="313" width="3" height="2" fill="#9c0c0c"/>
<line x1="728.5" y1="305" x2="728.5" y2="320" stroke="#9c0c0c"/>
<rect x="727" y="314" width="3" height="1" fill="#9c0c0c"/>
<line x1="734.5" y1="315" x2="734.5" y2="332" stroke="#9c0c0c"/>
<rect x="733" y="316" width="3" height="8" fill="#9c0c0c"/>
<line x1="740.5" y1="325" x2="740.5" y2="341" stroke="#9c0c0c"/>
<rect x="739" y="326" width="3" height="4" fill="#9c0c0c"/>
<line x1="747.5" y1="326" x2="747.5" y2="340" stroke="#9c0c0c"/>
<rect x="746" y="326" width="3" height="8" fill="#9c0c0c"/>
<line x1="753.5" y1="321" x2="753.5" y2="338" stroke="#2b7f2b"/>
<rect x="751.5" y="324.5" width="4" height="9" fill="#fff" stroke="#2b7f2b"/>
<line x1="759.5" y1="312" x2="759.5" y2="332" stroke="#9c0c0c"/>
<rect x="758" y="322" width="3" height="5" fill="#9c0c0c"/>
<line x1="765.5" y1="326" x2="765.5" y2="353" stroke="#9c0c0c"/>
<rect x="764" y="328" width="3" height="16" fill="#9c0c0c"/>
<line x1="771.5" y1="337" x2="771.5" y2="348" stroke="#9c0c0c"/>
<rect x="770" y="344" width="3" height="1" fill="#9c0c0c"/>
<line x1="777.5" y1="340" x2="777.5" y2="357" stroke="#9c0c0c"/>
<rect x="776" y="345" width="3" height="5" fill="#9c0c0c"/>
<line x1="783.5" y1="341" x2="783.5" y2="358" stroke="#2b7f2b"/>
<rect x="781.5" y="343.5" width="4" height="7" fill="#fff" stroke="#2b7f2b"/>
<line x1="789.5" y1="326" x2="789.5" y2="347" stroke="#2b7f2b"/>
<rect x="787.5" y="328.5" width="4" height="17" fill="#fff" stroke="#2b7f2b"/>
<line x1="796.5" y1="322" x2="796.5" y2="339" stroke="#9c0c0c"/>
<rect x="795" y="325" width="3" height="5" fill="#9c0c0c"/>
<line x1="802.5" y1="306" x2="802.5" y2="345" stroke="#9c0c0c"/>
<rect x="801" y="326" width="3" height="18" fill="#9c0c0c"/>
<line x1="808.5" y1="338" x2="808.5" y2="358" stroke="#9c0c0c"/>
<rect x="807" y="345" width="3" height="7" fill="#9c0c0c"/>
<line x1="814.5" y1="348" x2="814.5" y2="361" stroke="#2b7f2b"/>
<rect x="812.5" y="350.5" width="4" height="2" fill="#fff" stroke="#2b7f2b"/>
<line x1="820.5" y1="343" x2="820.5" y2="358" stroke="#2b7f2b"/>
<rect x="818.5" y="347.5" width="4" height="5" fill="#fff" stroke="#2b7f2b"/>
<line x1="826.5" y1="347" x2="826.5" y2="364" stroke="#9c0c0c"/>
<rect x="825" y="348" width="3" height="11" fill="#9c0c0c"/>
<line x1="832.5" y1="351" x2="832.5" y2="369" stroke="#2b7f2b"/>
<rect x="830.5" y="358.5" width="4" height="4" fill="#fff" stroke="#2b7f2b"/>
<line x1="838.5" y1="355" x2="838.5" y2="362" stroke="#2b7f2b"/>
<rect x="836.5" y="357.5" width="4" height="2" fill="#fff" stroke="#2b7f2b"/>
<line x1="845.5" y1="355" x2="845.5" y2="381" stroke="#9c0c0c"/>
<rect x="844" y="355" width="3" height="6" fill="#9c0c0c"/>
<line x1="851.5" y1="355" x2="851.5" y2="366" stroke="#9c0c0c"/>
<rect x="850" y="360" width="3" height="2" fill="#9c0c0c"/>
<line x1="857.5" y1="358" x2="857.5" y2="372" stroke="#9c0c0c"/>
<rect x="856" y="362" width="3" height="8" fill="#9c0c0c"/>
<line x1="863.5" y1="359" x2="863.5" y2="374" stroke="#9c0c0c"/>
<rect x="862" y="367" width="3" height="1" fill="#9c0c0c"/>
<line x1="869.5" y1="343" x2="869.5" y2="373" stroke="#2b7f2b"/>
<rect x="867.5" y="353.5" width="4" height="17" fill="#fff" stroke="#2b7f2b"/>
<line x1="875.5" y1="351" x2="875.5" y2="366" stroke="#9c0c0c"/>
<rect x="874" y="351" width="3" height="7" fill="#9c0c0c"/>
<line x1="881.5" y1="357" x2="881.5" y2="386" stroke="#9c0c0c"/>
<rect x="880" y="359" width="3" height="17" fill="#9c0c0c"/>
<line x1="887.5" y1="371" x2="887.5" y2="397" stroke="#2b7f2b"/>
<rect x="885.5" y="374.5" width="4" height="7" fill="#fff" stroke="#2b7f2b"/>
<line x1="893.5" y1="370" x2="893.5" y2="383" stroke="#9c0c0c"/>
<rect x="892" y="373" width="3" height="6" fill="#9c0c0c"/>
<line x1="900.5" y1="356" x2="900.5" y2="381" stroke="#2b7f2b"/>
<rect x="898.5" y="359.5" width="4" height="20" fill="#fff" stroke="#2b7f2b"/>
<line x1="906.5" y1="355" x2="906.5" y2="371" stroke="#9c0c0c"/>
<rect x="905" y="356" width="3" height="11" fill="#9c0c0c"/>
<line x1="912.5" y1="351" x2="912.5" y2="368" stroke="#2b7f2b"/>
<rect x="910.5" y="359.5" width="4" height="9" fill="#fff" stroke="#2b7f2b"/>
<line x1="918.5" y1="333" x2="918.5" y2="362" stroke="#2b7f2b"/>
<rect x="916.5" y="345.5" width="4" height="15" fill="#fff" stroke="#2b7f2b"/>
<line x1="924.5" y1="337" x2="924.5" y2="349" stroke="#2b7f2b"/>
<rect x="922.5" y="342.5" width="4" height="2" fill="#fff" stroke="#2b7f2b"/>
<line x1="930.5" y1="329" x2="930.5" y2="347" stroke="#2b7f2b"/>
<rect x="928.5" y="332.5" width="4" height="11" fill="#fff" stroke="#2b7f2b"/>
<line x1="936.5" y1="319" x2="936.5" y2="333" stroke="#2b7f2b"/>
<rect x="934.5" y="321.5" width="4" height="11" fill="#fff" stroke="#2b7f2b"/>
<line x1="942.5" y1="308" x2="942.5" y2="324" stroke="#9c0c0c"/>
<rect x="941" y="311" width="3" height="2" fill="#9c0c0c"/>
<line x1="949.5" y1="312" x2="949.5" y2="322" stroke="#9c0c0c"/>
<rect x="948" y="313" width="3" height="6" fill="#9c0c0c"/>
<line x1="955.5" y1="310" x2="955.5" y2="329" stroke="#2b7f2b"/>
<rect x="953.5" y="311.5" width="4" height="11" fill="#fff" stroke="#2b7f2b"/>
<line x1="961.5" y1="310" x2="961.5" y2="346" stroke="#9c0c0c"/>
<rect x="960" y="311" width="3" height="27" fill="#9c0c0c"/>
<line x1="967.5" y1="340" x2="967.5" y2="353" stroke="#9c0c0c"/>
<rect x="966" y="346" width="3" height="1" fill="#9c0c0c"/>
<line x1="973.5" y1="341" x2="973.5" y2="353" stroke="#9c0c0c"/>
<rect x="972" y="345" width="3" height="2" fill="#9c0c0c"/>
<line x1="979.5" y1="340" x2="979.5" y2="363" stroke="#9c0c0c"/>
<rect x="978" y="349" width="3" height="4" fill="#9c0c0c"/>
<line x1="985.5" y1="350" x2="985.5" y2="360" stroke="#2b7f2b"/>
<rect x="983.5" y="351.5" width="4" height="3" fill="#fff" stroke="#2b7f2b"/>
<line x1="991.5" y1="346" x2="991.5" y2="371" stroke="#9c0c0c"/>
<rect x="990" y="350" width="3" height="7" fill="#9c0c0c"/>
</svg>
<svg style="left:0;top:0" width="1024" height="742" viewBox="0 0 1024 742">
<polyline points="562.3,196.0 998.0,316.5" fill="none" stroke="#1a1a88" stroke-width="1.1"/>
<polyline points="391.4,322.0 998.0,411.8" fill="none" stroke="#1a1a88" stroke-width="1.1"/>
</svg>
<svg style="left:0;top:0" width="1024" height="742" viewBox="0 0 1024 742" shape-rendering="crispEdges">
<rect x="36.5" y="472.5" width="962" height="14" fill="#ececec" stroke="#dcdcdc"/>
<line x1="36" y1="485.5" x2="999" y2="485.5" stroke="#dcdcdc"/>
<line x1="36" y1="507.5" x2="999" y2="507.5" stroke="#dcdcdc"/>
<line x1="36" y1="528.5" x2="999" y2="528.5" stroke="#dcdcdc"/>
<line x1="36" y1="549.5" x2="999" y2="549.5" stroke="#dcdcdc"/>
<line x1="36" y1="571.5" x2="999" y2="571.5" stroke="#dcdcdc"/>
<line x1="48.5" y1="486" x2="48.5" y2="571" stroke="#dcdcdc"/>
<line x1="373.5" y1="486" x2="373.5" y2="571" stroke="#dcdcdc"/>
<line x1="691.5" y1="486" x2="691.5" y2="571" stroke="#dcdcdc"/>
<line x1="36.5" y1="472" x2="36.5" y2="571" stroke="#dcdcdc"/>
<line x1="998.5" y1="472" x2="998.5" y2="571" stroke="#dcdcdc"/>
<rect x="42.5" y="518" width="2" height="2" fill="#6f8a6f"/>
<rect x="48.5" y="517" width="2" height="3" fill="#6f8a6f"/>
<rect x="54.5" y="515" width="2" height="5" fill="#6f8a6f"/>
<rect x="60.5" y="512" width="2" height="8" fill="#6f8a6f"/>
<rect x="66.5" y="511" width="2" height="9" fill="#6f8a6f"/>
<rect x="72.5" y="511" width="2" height="9" fill="#6f8a6f"/>
<rect x="78.5" y="513" width="2" height="7" fill="#6f8a6f"/>
<rect x="84.5" y="514" width="2" height="6" fill="#6f8a6f"/>
<rect x="90.5" y="515" width="2" height="5" fill="#6f8a6f"/>
<rect x="97.5" y="517" width="2" height="3" fill="#6f8a6f"/>
<rect x="103.5" y="517" width="2" height="3" fill="#6f8a6f"/>
<rect x="115.5" y="521" width="2" height="3" fill="#6f8a6f"/>
<rect x="121.5" y="521" width="2" height="4" fill="#6f8a6f"/>
<rect x="127.5" y="521" width="2" height="2" fill="#6f8a6f"/>
<rect x="133.5" y="521" width="2" height="2" fill="#6f8a6f"/>
<rect x="139.5" y="521" width="2" height="4" fill="#6f8a6f"/>
<rect x="146.5" y="521" width="2" height="4" fill="#6f8a6f"/>
<rect x="152.5" y="521" width="2" height="7" fill="#6f8a6f"/>
<rect x="158.5" y="521" width="2" height="8" fill="#6f8a6f"/>
<rect x="164.5" y="521" width="2" height="9" fill="#6f8a6f"/>
<rect x="170.5" y="521" width="2" height="9" fill="#6f8a6f"/>
<rect x="176.5" y="521" width="2" height="10" fill="#6f8a6f"/>
<rect x="182.5" y="521" width="2" height="10" fill="#6f8a6f"/>
<rect x="188.5" y="521" width="2" height="10" fill="#6f8a6f"/>
<rect x="195.5" y="521" width="2" height="11" fill="#6f8a6f"/>
<rect x="201.5" y="521" width="2" height="10" fill="#6f8a6f"/>
<rect x="207.5" y="521" width="2" height="9" fill="#6f8a6f"/>
<rect x="213.5" y="521" width="2" height="9" fill="#6f8a6f"/>
<rect x="219.5" y="521" width="2" height="11" fill="#6f8a6f"/>
<rect x="225.5" y="521" width="2" height="9" fill="#6f8a6f"/>
<rect x="231.5" y="521" width="2" height="9" fill="#6f8a6f"/>
<rect x="237.5" y="521" width="2" height="6" fill="#6f8a6f"/>
<rect x="244.5" y="521" width="2" height="4" fill="#6f8a6f"/>
<rect x="250.5" y="521" width="2" height="3" fill="#6f8a6f"/>
<rect x="268.5" y="519" width="2" height="1" fill="#6f8a6f"/>
<rect x="274.5" y="518" width="2" height="2" fill="#6f8a6f"/>
<rect x="280.5" y="518" width="2" height="2" fill="#6f8a6f"/>
<rect x="286.5" y="517" width="2" height="3" fill="#6f8a6f"/>
<rect x="293.5" y="516" width="2" height="4" fill="#6f8a6f"/>
<rect x="299.5" y="515" width="2" height="5" fill="#6f8a6f"/>
<rect x="305.5" y="514" width="2" height="6" fill="#6f8a6f"/>
<rect x="311.5" y="514" width="2" height="6" fill="#6f8a6f"/>
<rect x="317.5" y="514" width="2" height="6" fill="#6f8a6f"/>
<rect x="323.5" y="513" width="2" height="7" fill="#6f8a6f"/>
<rect x="329.5" y="512" width="2" height="8" fill="#6f8a6f"/>
<rect x="335.5" y="512" width="2" height="8" fill="#6f8a6f"/>
<rect x="341.5" y="514" width="2" height="6" fill="#6f8a6f"/>
<rect x="348.5" y="514" width="2" height="6" fill="#6f8a6f"/>
<rect x="354.5" y="515" width="2" height="5" fill="#6f8a6f"/>
<rect x="360.5" y="514" width="2" height="6" fill="#6f8a6f"/>
<rect x="366.5" y="514" width="2" height="6" fill="#6f8a6f"/>
<rect x="372.5" y="514" width="2" height="6" fill="#6f8a6f"/>
<rect x="378.5" y="514" width="2" height="6" fill="#6f8a6f"/>
<rect x="384.5" y="517" width="2" height="3" fill="#6f8a6f"/>
<rect x="390.5" y="517" width="2" height="3" fill="#6f8a6f"/>
<rect x="397.5" y="516" width="2" height="4" fill="#6f8a6f"/>
<rect x="403.5" y="515" width="2" height="5" fill="#6f8a6f"/>
<rect x="409.5" y="516" width="2" height="4" fill="#6f8a6f"/>
<rect x="415.5" y="515" width="2" height="5" fill="#6f8a6f"/>
<rect x="421.5" y="513" width="2" height="7" fill="#6f8a6f"/>
<rect x="427.5" y="511" width="2" height="9" fill="#6f8a6f"/>
<rect x="433.5" y="512" width="2" height="8" fill="#6f8a6f"/>
<rect x="439.5" y="512" width="2" height="8" fill="#6f8a6f"/>
<rect x="446.5" y="514" width="2" height="6" fill="#6f8a6f"/>
<rect x="452.5" y="516" width="2" height="4" fill="#6f8a6f"/>
<rect x="458.5" y="517" width="2" height="3" fill="#6f8a6f"/>
<rect x="470.5" y="521" width="2" height="3" fill="#6f8a6f"/>
<rect x="476.5" y="521" width="2" height="4" fill="#6f8a6f"/>
<rect x="482.5" y="521" width="2" height="6" fill="#6f8a6f"/>
<rect x="488.5" y="521" width="2" height="4" fill="#6f8a6f"/>
<rect x="495.5" y="521" width="2" height="3" fill="#6f8a6f"/>
<rect x="501.5" y="521" width="2" height="2" fill="#6f8a6f"/>
<rect x="544.5" y="519" width="2" height="1" fill="#6f8a6f"/>
<rect x="550.5" y="519" width="2" height="1" fill="#6f8a6f"/>
<rect x="556.5" y="519" width="2" height="1" fill="#6f8a6f"/>
<rect x="562.5" y="519" width="2" height="1" fill="#6f8a6f"/>
<rect x="568.5" y="521" width="2" height="1" fill="#6f8a6f"/>
<rect x="574.5" y="521" width="2" height="6" fill="#6f8a6f"/>
<rect x="580.5" y="521" width="2" height="9" fill="#6f8a6f"/>
<rect x="586.5" y="521" width="2" height="11" fill="#6f8a6f"/>
<rect x="593.5" y="521" width="2" height="12" fill="#6f8a6f"/>
<rect x="599.5" y="521" width="2" height="14" fill="#6f8a6f"/>
<rect x="605.5" y="521" width="2" height="13" fill="#6f8a6f"/>
<rect x="611.5" y="521" width="2" height="13" fill="#6f8a6f"/>
<rect x="617.5" y="521" width="2" height="11" fill="#6f8a6f"/>
<rect x="623.5" y="521" width="2" height="11" fill="#6f8a6f"/>
<rect x="629.5" y="521" width="2" height="9" fill="#6f8a6f"/>
<rect x="635.5" y="521" width="2" height="9" fill="#6f8a6f"/>
<rect x="641.5" y="521" width="2" height="8" fill="#6f8a6f"/>
<rect x="648.5" y="521" width="2" height="6" fill="#6f8a6f"/>
<rect x="654.5" y="521" width="2" height="4" fill="#6f8a6f"/>
<rect x="660.5" y="521" width="2" height="3" fill="#6f8a6f"/>
<rect x="684.5" y="519" width="2" height="1" fill="#6f8a6f"/>
<rect x="690.5" y="518" width="2" height="2" fill="#6f8a6f"/>
<rect x="697.5" y="515" width="2" height="5" fill="#6f8a6f"/>
<rect x="703.5" y="515" width="2" height="5" fill="#6f8a6f"/>
<rect x="709.5" y="515" width="2" height="5" fill="#6f8a6f"/>
<rect x="715.5" y="516" width="2" height="4" fill="#6f8a6f"/>
<rect x="721.5" y="516" width="2" height="4" fill="#6f8a6f"/>
<rect x="727.5" y="516" width="2" height="4" fill="#6f8a6f"/>
<rect x="733.5" y="516" width="2" height="4" fill="#6f8a6f"/>
<rect x="739.5" y="517" width="2" height="3" fill="#6f8a6f"/>
<rect x="746.5" y="518" width="2" height="2" fill="#6f8a6f"/>
<rect x="752.5" y="519" width="2" height="1" fill="#6f8a6f"/>
<rect x="758.5" y="519" width="2" height="1" fill="#6f8a6f"/>
<rect x="764.5" y="519" width="2" height="1" fill="#6f8a6f"/>
<rect x="782.5" y="521" width="2" height="1" fill="#6f8a6f"/>
<rect x="788.5" y="521" width="2" height="1" fill="#6f8a6f"/>
<rect x="795.5" y="519" width="2" height="1" fill="#6f8a6f"/>
<rect x="874.5" y="519" width="2" height="1" fill="#6f8a6f"/>
<rect x="905.5" y="519" width="2" height="1" fill="#6f8a6f"/>
<rect x="911.5" y="518" width="2" height="2" fill="#6f8a6f"/>
<rect x="917.5" y="517" width="2" height="3" fill="#6f8a6f"/>
<rect x="923.5" y="516" width="2" height="4" fill="#6f8a6f"/>
<rect x="929.5" y="514" width="2" height="6" fill="#6f8a6f"/>
<rect x="935.5" y="513" width="2" height="7" fill="#6f8a6f"/>
<rect x="941.5" y="512" width="2" height="8" fill="#6f8a6f"/>
<rect x="948.5" y="512" width="2" height="8" fill="#6f8a6f"/>
<rect x="954.5" y="513" width="2" height="7" fill="#6f8a6f"/>
<rect x="960.5" y="514" width="2" height="6" fill="#6f8a6f"/>
<rect x="966.5" y="517" width="2" height="3" fill="#6f8a6f"/>
<rect x="972.5" y="518" width="2" height="2" fill="#6f8a6f"/>
<rect x="978.5" y="519" width="2" height="1" fill="#6f8a6f"/>
<rect x="984.5" y="519" width="2" height="1" fill="#6f8a6f"/>
<rect x="990.5" y="519" width="2" height="1" fill="#6f8a6f"/>
<line x1="36" y1="520.5" x2="999" y2="520.5" stroke="#444"/>
<rect x="36.5" y="586.5" width="962" height="14" fill="#ececec" stroke="#dcdcdc"/>
<line x1="36" y1="685.5" x2="999" y2="685.5" stroke="#dcdcdc"/>
<line x1="48.5" y1="600" x2="48.5" y2="685" stroke="#dcdcdc"/>
<line x1="373.5" y1="600" x2="373.5" y2="685" stroke="#dcdcdc"/>
<line x1="691.5" y1="600" x2="691.5" y2="685" stroke="#dcdcdc"/>
<line x1="36.5" y1="586" x2="36.5" y2="685" stroke="#dcdcdc"/>
<line x1="998.5" y1="586" x2="998.5" y2="685" stroke="#dcdcdc"/>
</svg>
<svg style="left:0;top:0" width="1024" height="742" viewBox="0 0 1024 742">
<defs><clipPath id="ob"><rect x="36" y="590" width="963" height="27.2"/></clipPath><clipPath id="os"><rect x="36" y="668.2" width="963" height="20"/></clipPath></defs>
<polygon points="36.3,617.2 36.3,621.7 44.0,617.4 46.5,613.4 52.9,610.8 60.5,604.0 66.8,608.3 73.2,615.4 78.2,625.6 84.6,628.6 93.5,629.4 98.6,630.6 103.6,628.6 111.3,637.0 121.4,655.5 129.0,649.7 136.7,645.4 144.3,652.2 154.4,663.6 167.1,671.3 182.4,675.8 202.7,677.6 217.9,677.6 225.5,681.4 233.1,676.3 243.3,653.5 256.0,636.2 268.7,635.7 276.3,636.2 283.9,629.4 287.6,625.6 295.2,615.4 302.9,607.8 307.9,605.7 315.6,606.5 323.2,608.3 333.3,609.0 337.1,607.8 343.5,611.6 353.6,614.9 358.7,611.6 365.1,607.8 371.4,607.3 379.0,609.8 386.7,615.4 390.5,621.7 396.8,619.2 404.4,610.3 414.6,607.3 426.0,605.7 432.4,609.0 440.0,621.7 447.6,629.4 462.8,635.7 470.5,644.6 478.1,654.8 484.4,662.4 494.6,658.1 503.5,647.1 513.6,630.6 526.3,621.0 533.9,619.2 535.1,616.7 540.2,611.6 547.8,607.3 551.6,604.0 556.7,603.2 561.7,607.3 565.6,615.4 570.6,630.6 575.7,650.9 580.8,668.7 588.4,678.9 598.6,676.3 606.2,675.1 618.9,671.8 631.6,677.6 644.3,673.3 659.5,667.5 667.1,654.8 677.3,638.2 684.9,633.2 691.2,621.7 697.6,618.4 702.7,621.7 710.3,630.1 717.9,634.4 728.1,637.0 733.1,642.1 740.8,656.0 745.8,666.2 753.5,664.9 764.0,664.9 769.1,668.7 776.7,675.1 784.3,668.7 789.4,658.6 795.7,646.4 802.1,647.1 808.4,657.3 814.8,669.2 824.9,670.0 837.6,672.5 850.3,666.2 858.0,666.7 865.6,670.0 875.7,662.4 883.3,663.6 893.5,662.4 898.6,647.1 906.2,642.1 911.3,633.2 918.9,628.1 926.5,615.4 931.6,609.0 941.8,604.0 945.3,605.9 955.8,605.9 963.0,617.5 967.2,625.6 974.8,639.5 982.4,648.4 991.3,660.6 991.3,617.2" fill="#7a0000" clip-path="url(#ob)"/>
<polygon points="36.3,668.2 36.3,621.7 44.0,617.4 46.5,613.4 52.9,610.8 60.5,604.0 66.8,608.3 73.2,615.4 78.2,625.6 84.6,628.6 93.5,629.4 98.6,630.6 103.6,628.6 111.3,637.0 121.4,655.5 129.0,649.7 136.7,645.4 144.3,652.2 154.4,663.6 167.1,671.3 182.4,675.8 202.7,677.6 217.9,677.6 225.5,681.4 233.1,676.3 243.3,653.5 256.0,636.2 268.7,635.7 276.3,636.2 283.9,629.4 287.6,625.6 295.2,615.4 302.9,607.8 307.9,605.7 315.6,606.5 323.2,608.3 333.3,609.0 337.1,607.8 343.5,611.6 353.6,614.9 358.7,611.6 365.1,607.8 371.4,607.3 379.0,609.8 386.7,615.4 390.5,621.7 396.8,619.2 404.4,610.3 414.6,607.3 426.0,605.7 432.4,609.0 440.0,621.7 447.6,629.4 462.8,635.7 470.5,644.6 478.1,654.8 484.4,662.4 494.6,658.1 503.5,647.1 513.6,630.6 526.3,621.0 533.9,619.2 535.1,616.7 540.2,611.6 547.8,607.3 551.6,604.0 556.7,603.2 561.7,607.3 565.6,615.4 570.6,630.6 575.7,650.9 580.8,668.7 588.4,678.9 598.6,676.3 606.2,675.1 618.9,671.8 631.6,677.6 644.3,673.3 659.5,667.5 667.1,654.8 677.3,638.2 684.9,633.2 691.2,621.7 697.6,618.4 702.7,621.7 710.3,630.1 717.9,634.4 728.1,637.0 733.1,642.1 740.8,656.0 745.8,666.2 753.5,664.9 764.0,664.9 769.1,668.7 776.7,675.1 784.3,668.7 789.4,658.6 795.7,646.4 802.1,647.1 808.4,657.3 814.8,669.2 824.9,670.0 837.6,672.5 850.3,666.2 858.0,666.7 865.6,670.0 875.7,662.4 883.3,663.6 893.5,662.4 898.6,647.1 906.2,642.1 911.3,633.2 918.9,628.1 926.5,615.4 931.6,609.0 941.8,604.0 945.3,605.9 955.8,605.9 963.0,617.5 967.2,625.6 974.8,639.5 982.4,648.4 991.3,660.6 991.3,668.2" fill="#127812" clip-path="url(#os)"/>
</svg>
<svg style="left:0;top:0" width="1024" height="742" viewBox="0 0 1024 742" shape-rendering="crispEdges">
<line x1="36" y1="617.5" x2="999" y2="617.5" stroke="#333"/>
<line x1="36" y1="668.5" x2="999" y2="668.5" stroke="#333"/>
<line x1="36" y1="642.5" x2="999" y2="642.5" stroke="#333" stroke-dasharray="3,2"/>
</svg>
<svg style="left:0;top:0" width="1024" height="742" viewBox="0 0 1024 742">
<polyline points="36.3,504.9 50.3,504.1 63.0,499.0 80.8,493.2 101.1,490.2 111.3,490.7 131.6,494.0 151.9,499.0 169.7,506.7 187.4,514.3 202.7,521.9 217.9,528.2 233.1,533.3 248.4,535.9 268.7,536.4 290.0,533.8 305.4,530.8 330.8,523.2 348.6,517.6 368.9,513.0 394.3,507.4 414.6,504.1 432.4,498.3 445.1,495.7 460.3,494.0 475.5,496.5 493.3,500.3 508.5,500.8 540.0,500.8 563.0,500.3 580.8,505.4 596.0,513.0 613.8,521.9 631.6,530.8 646.8,537.1 662.0,539.7 677.3,538.9 692.5,537.1 712.8,533.8 733.1,530.8 753.5,528.8 773.8,530.3 789.4,530.3 814.8,530.8 840.2,532.8 865.6,533.3 891.0,533.3 911.3,532.1 929.1,528.2 946.8,523.2 957.0,520.1 967.2,518.6 979.8,519.4 991.3,518.6" fill="none" stroke="#c41a1a" stroke-width="1.1"/>
<polyline points="36.3,502.3 45.2,501.6 55.4,497.8 63.0,491.4 71.9,487.6 90.9,487.6 99.8,489.6 103.6,488.1 108.7,491.4 118.9,496.5 131.6,497.8 144.3,502.3 157.0,508.4 169.7,514.3 179.8,520.1 192.5,525.7 200.1,530.3 210.3,533.8 223.0,539.7 233.1,542.2 240.8,541.5 253.5,537.1 266.2,535.4 278.9,533.3 290.0,530.3 305.4,525.7 323.2,518.1 335.9,514.3 348.6,513.0 361.3,509.2 374.0,506.2 394.3,505.4 412.0,499.8 422.2,497.3 432.4,492.2 441.2,489.4 452.7,490.7 462.8,492.7 473.0,499.8 485.7,504.1 498.4,504.1 508.5,501.6 518.7,502.3 533.9,502.3 547.8,499.8 563.0,499.8 570.6,504.1 580.8,513.0 590.9,521.9 601.1,531.3 613.8,534.6 629.0,542.2 641.7,543.5 659.5,543.5 669.7,540.4 682.4,537.9 692.5,532.1 707.8,529.5 723.0,527.7 735.7,527.2 748.4,528.8 763.6,529.5 776.7,532.1 794.5,529.5 814.8,530.8 840.2,533.3 865.6,533.8 891.0,533.8 908.7,532.1 921.4,525.7 936.7,518.1 946.8,514.3 957.0,512.5 964.6,514.3 974.8,517.6 984.9,519.4 991.3,518.6" fill="none" stroke="#000" stroke-width="1.1"/>
<polyline points="36.3,629.4 47.8,617.9 57.9,611.6 66.8,607.3 74.4,610.3 83.3,623.0 98.6,629.4 106.2,630.6 118.9,643.3 129.0,649.7 139.2,645.9 149.4,654.8 164.6,666.2 182.4,675.1 202.7,676.3 225.5,678.9 238.2,671.3 248.4,656.0 258.5,642.1 271.2,635.7 283.9,633.2 290.2,625.6 297.8,616.7 307.9,607.3 318.1,605.7 330.8,609.0 348.6,612.9 361.3,610.8 374.0,608.3 386.7,613.4 396.8,617.4 407.0,611.6 422.2,607.3 434.9,609.0 447.6,623.0 462.8,631.9 478.1,645.9 490.8,658.6 503.5,650.9 513.6,635.7 528.9,624.3 540.2,615.4 552.9,606.5 560.5,605.2 568.1,612.9 574.4,628.1 580.8,648.4 587.1,668.7 596.0,676.3 613.8,673.3 634.1,676.3 657.0,668.7 672.2,650.9 687.4,631.9 700.1,620.0 712.8,625.6 730.6,635.2 743.3,651.0 753.5,663.6 768.7,666.2 771.6,671.8 784.3,670.0 799.5,651.0 807.2,651.5 819.9,666.2 837.6,671.3 858.0,666.2 873.2,665.7 891.0,662.4 903.7,645.9 916.4,630.6 929.1,615.4 941.8,606.5 954.5,606.5 964.6,611.6 974.8,628.1 984.9,643.3 991.3,652.2" fill="none" stroke="#d9a88a" stroke-width="1"/>
<polyline points="36.3,621.7 44.0,617.4 46.5,613.4 52.9,610.8 60.5,604.0 66.8,608.3 73.2,615.4 78.2,625.6 84.6,628.6 93.5,629.4 98.6,630.6 103.6,628.6 111.3,637.0 121.4,655.5 129.0,649.7 136.7,645.4 144.3,652.2 154.4,663.6 167.1,671.3 182.4,675.8 202.7,677.6 217.9,677.6 225.5,681.4 233.1,676.3 243.3,653.5 256.0,636.2 268.7,635.7 276.3,636.2 283.9,629.4 287.6,625.6 295.2,615.4 302.9,607.8 307.9,605.7 315.6,606.5 323.2,608.3 333.3,609.0 337.1,607.8 343.5,611.6 353.6,614.9 358.7,611.6 365.1,607.8 371.4,607.3 379.0,609.8 386.7,615.4 390.5,621.7 396.8,619.2 404.4,610.3 414.6,607.3 426.0,605.7 432.4,609.0 440.0,621.7 447.6,629.4 462.8,635.7 470.5,644.6 478.1,654.8 484.4,662.4 494.6,658.1 503.5,647.1 513.6,630.6 526.3,621.0 533.9,619.2 535.1,616.7 540.2,611.6 547.8,607.3 551.6,604.0 556.7,603.2 561.7,607.3 565.6,615.4 570.6,630.6 575.7,650.9 580.8,668.7 588.4,678.9 598.6,676.3 606.2,675.1 618.9,671.8 631.6,677.6 644.3,673.3 659.5,667.5 667.1,654.8 677.3,638.2 684.9,633.2 691.2,621.7 697.6,618.4 702.7,621.7 710.3,630.1 717.9,634.4 728.1,637.0 733.1,642.1 740.8,656.0 745.8,666.2 753.5,664.9 764.0,664.9 769.1,668.7 776.7,675.1 784.3,668.7 789.4,658.6 795.7,646.4 802.1,647.1 808.4,657.3 814.8,669.2 824.9,670.0 837.6,672.5 850.3,666.2 858.0,666.7 865.6,670.0 875.7,662.4 883.3,663.6 893.5,662.4 898.6,647.1 906.2,642.1 911.3,633.2 918.9,628.1 926.5,615.4 931.6,609.0 941.8,604.0 945.3,605.9 955.8,605.9 963.0,617.5 967.2,625.6 974.8,639.5 982.4,648.4 991.3,660.6" fill="none" stroke="#111" stroke-width="1.1"/>
</svg>
<div class="r" style="left:41px;top:174px;width:8px;height:8px;background:#1a8f86;"></div>
<div class="t" style="left:52px;top:174.40px;font-size:10.4px;line-height:10.4px;font-weight:normal;color:#000;">EMA 200</div>
<div class="r" style="left:101px;top:174px;width:8px;height:8px;background:#8080f0;"></div>
<div class="t" style="left:111.4px;top:174.57px;font-size:10.2px;line-height:10.2px;font-weight:normal;color:#000;">BBands 20</div>
<div class="r" style="left:41px;top:475px;width:8px;height:8px;background:#000;"></div>
<div class="t" style="left:51.6px;top:475.28px;font-size:10.3px;line-height:10.3px;font-weight:normal;color:#000;">MACD 12, 26, 9</div>
<div class="r" style="left:133px;top:475px;width:8px;height:8px;background:#e01010;"></div>
<div class="t" style="left:146px;top:475.03px;font-size:10.6px;line-height:10.6px;font-weight:normal;color:#000;">Trigger</div>
<div class="r" style="left:41px;top:589px;width:8px;height:8px;background:#000;"></div>
<div class="t" style="left:51.6px;top:589.28px;font-size:10.3px;line-height:10.3px;font-weight:normal;color:#000;">Slow Stochastik K(14), D(3)</div>
<div class="r" style="left:185px;top:589px;width:8px;height:8px;background:#d9b090;"></div>
<div class="t" style="left:194.6px;top:589.28px;font-size:10.3px;line-height:10.3px;font-weight:normal;color:#000;">SMA (3)</div>
<div class="t" style="left:999.5px;top:438.33px;font-size:10.6px;line-height:10.6px;font-weight:normal;color:#000;">12</div>
<div class="t" style="left:999.5px;top:414.33px;font-size:10.6px;line-height:10.6px;font-weight:normal;color:#000;">13</div>
<div class="t" style="left:999.5px;top:391.33px;font-size:10.6px;line-height:10.6px;font-weight:normal;color:#000;">14</div>
<div class="t" style="left:999.5px;top:367.33px;font-size:10.6px;line-height:10.6px;font-weight:normal;color:#000;">15</div>
<div class="t" style="left:999.5px;top:344.33px;font-size:10.6px;line-height:10.6px;font-weight:normal;color:#000;">16</div>
<div class="t" style="left:999.5px;top:320.33px;font-size:10.6px;line-height:10.6px;font-weight:normal;color:#000;">17</div>
<div class="t" style="left:999.5px;top:297.33px;font-size:10.6px;line-height:10.6px;font-weight:normal;color:#000;">18</div>
<div class="t" style="left:999.5px;top:273.33px;font-size:10.6px;line-height:10.6px;font-weight:normal;color:#000;">19</div>
<div class="t" style="left:999.5px;top:250.33px;font-size:10.6px;line-height:10.6px;font-weight:normal;color:#000;">20</div>
<div class="t" style="left:999.5px;top:226.33px;font-size:10.6px;line-height:10.6px;font-weight:normal;color:#000;">21</div>
<div class="t" style="left:999.5px;top:203.33px;font-size:10.6px;line-height:10.6px;font-weight:normal;color:#000;">22</div>
<div class="t" style="left:999.5px;top:180.33px;font-size:10.6px;line-height:10.6px;font-weight:normal;color:#000;">23</div>
<div class="t" style="left:999.5px;top:480.33px;font-size:10.6px;line-height:10.6px;font-weight:normal;color:#000;">1,3</div>
<div class="t" style="left:999.5px;top:502.33px;font-size:10.6px;line-height:10.6px;font-weight:normal;color:#000;">0,5</div>
<div class="t" style="left:999.5px;top:523.33px;font-size:10.6px;line-height:10.6px;font-weight:normal;color:#000;">-0,3</div>
<div class="t" style="left:999.5px;top:544.33px;font-size:10.6px;line-height:10.6px;font-weight:normal;color:#000;">-1,1</div>
<div class="t" style="left:999.5px;top:566.33px;font-size:10.6px;line-height:10.6px;font-weight:normal;color:#000;">-1,9</div>
<div class="t" style="left:999.5px;top:595.33px;font-size:10.6px;line-height:10.6px;font-weight:normal;color:#000;">100</div>
<div class="t" style="left:999.5px;top:612.33px;font-size:10.6px;line-height:10.6px;font-weight:normal;color:#000;">80</div>
<div class="t" style="left:999.5px;top:637.33px;font-size:10.6px;line-height:10.6px;font-weight:normal;color:#000;">50</div>
<div class="t" style="left:999.5px;top:663.33px;font-size:10.6px;line-height:10.6px;font-weight:normal;color:#000;">20</div>
<div class="t" style="left:999.5px;top:680.33px;font-size:10.6px;line-height:10.6px;font-weight:normal;color:#000;">0</div>
<div class="t" style="left:197.6px;top:447.11px;font-size:10.5px;line-height:10.5px;font-weight:normal;color:#000;">2004</div>
<div class="t" style="left:520px;top:447.11px;font-size:10.5px;line-height:10.5px;font-weight:normal;color:#000;">2005</div>
<div class="t" style="left:831.6px;top:447.11px;font-size:10.5px;line-height:10.5px;font-weight:normal;color:#000;">2006</div>
<div class="r" style="left:970px;top:474px;width:11px;height:11px;background:#e4e4e4;border:1px solid #c0c0c0;"></div>
<div class="r" style="left:984px;top:474px;width:11px;height:11px;background:#f4f4f4;border:1px solid #c0c0c0;"></div>
<svg style="left:984px;top:474px" width="11" height="11"><path d="M3,3 L8,8 M8,3 L3,8" stroke="#922" stroke-width="1.2"/></svg>
<svg style="left:970px;top:474px" width="11" height="11" shape-rendering="crispEdges"><g fill="#666"><rect x="3" y="3" width="2" height="2"/><rect x="6" y="3" width="2" height="2"/><rect x="3" y="6" width="2" height="2"/><rect x="6" y="6" width="2" height="2"/></g></svg>
<div class="r" style="left:970px;top:588px;width:11px;height:11px;background:#e4e4e4;border:1px solid #c0c0c0;"></div>
<div class="r" style="left:984px;top:588px;width:11px;height:11px;background:#f4f4f4;border:1px solid #c0c0c0;"></div>
<svg style="left:984px;top:588px" width="11" height="11"><path d="M3,3 L8,8 M8,3 L3,8" stroke="#922" stroke-width="1.2"/></svg>
<svg style="left:970px;top:588px" width="11" height="11" shape-rendering="crispEdges"><g fill="#666"><rect x="3" y="3" width="2" height="2"/><rect x="6" y="3" width="2" height="2"/><rect x="3" y="6" width="2" height="2"/><rect x="6" y="6" width="2" height="2"/></g></svg>
<div class="r" style="left:29px;top:696px;width:992px;height:11px;background:#fff;border:1px solid #000;"></div>
<div class="r" style="left:504px;top:698px;width:514px;height:7px;background:#000;"></div>
<div class="r" style="left:0px;top:710px;width:1024px;height:2px;background:#fff;"></div>
<div class="r" style="left:0px;top:712px;width:1024px;height:2px;background:#7f7b72;"></div>
<div class="r" style="left:0px;top:714px;width:1024px;height:23px;background:#ece9d8;"></div>
<div class="r" style="left:0px;top:712px;width:2px;height:25px;background:#aca899;"></div>
<div class="t" style="left:4px;top:723.27px;font-size:10.9px;line-height:10.9px;font-weight:normal;color:#000;">Java Applet Window</div>
<div class="r" style="left:0px;top:737px;width:1024px;height:1px;background:#f6f4ec;"></div>
<div class="r" style="left:0px;top:738px;width:96px;height:4px;background:linear-gradient(#2f8a3a,#58b060);"></div>
<div class="r" style="left:96px;top:738px;width:928px;height:4px;background:linear-gradient(#2a70d8,#4a94f2);"></div>
</body></html>
